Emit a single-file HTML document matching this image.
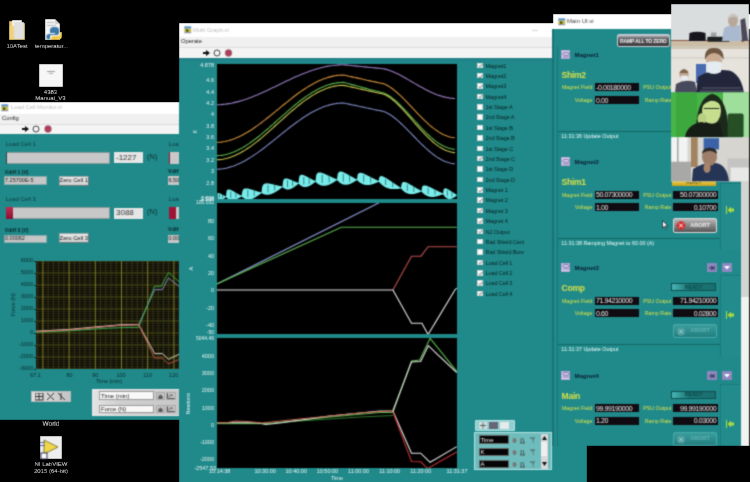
<!DOCTYPE html><html><head><meta charset="utf-8"><style>
html,body{margin:0;padding:0;width:750px;height:482px;overflow:hidden;background:#000;}
body{position:relative;font-family:"Liberation Sans",sans-serif;}
div{position:absolute;box-sizing:border-box;}
.t{white-space:nowrap;}
svg{position:absolute;}
</style></head><body><svg width="10" height="10" style="position:absolute;left:0;top:0"><defs><filter id="gb" x="0" y="0" width="100%" height="100%" color-interpolation-filters="sRGB"><feConvolveMatrix order="3" kernelMatrix="0.09 0.3 0.09 0.3 1 0.3 0.09 0.3 0.09" edgeMode="duplicate" preserveAlpha="true"/></filter></defs></svg><div id="root" style="left:0;top:0;width:750px;height:482px;overflow:hidden;filter:url(#gb);">
<svg style="left:8px;top:18px" width="18" height="23"><path d="M1 3 L7 3 L8 5 L17 5 L17 22 L1 22 Z" fill="#e8c766"/><rect x="4" y="2" width="10" height="18" fill="#f4f4f4"/><rect x="6" y="4" width="10" height="17" fill="#e0e0e0"/><path d="M1 8 L6 8 L6 22 L1 22Z" fill="#f0d27a"/></svg>
<div class="t" style="left:-23.0px;top:41.5px;width:80px;font-size:6px;line-height:8px;color:#fff;text-align:center;">10ATest</div>
<svg style="left:43px;top:18px" width="21" height="23"><path d="M2 1 L12 1 L17 6 L17 22 L2 22Z" fill="#f5f5f5"/><path d="M12 1 L12 6 L17 6Z" fill="#ccc"/><rect x="4" y="4" width="7" height="1" fill="#bbb"/><rect x="4" y="7" width="9" height="1" fill="#bbb"/><path d="M12 9 C7 9 7 11 7 13 L7 15 L12 15 L12 16 L6 16 C3 16 3 19 4 21 L7 21 L7 18 C7 17 8 17 9 17 L14 17 C15 17 16 16 16 15 L16 12 C16 10 15 9 12 9Z" fill="#3b78aa"/><path d="M13 22 C18 22 19 20 19 18 L19 14 L17 14 L17 16 C17 18 16 18 15 18 L10 18 C9 18 8 19 8 20 L8 21 C8 22 10 22 13 22Z" fill="#f2c94a"/></svg>
<div class="t" style="left:11.5px;top:41.5px;width:80px;font-size:6px;line-height:8px;color:#fff;text-align:center;">temperatur...</div>
<div style="left:39px;top:64px;width:24px;height:23px;background:#f7f7f7;"></div>
<div style="left:47px;top:71px;width:8px;height:1px;background:#999;"></div>
<div style="left:49px;top:73px;width:4px;height:1px;background:#aaa;"></div>
<div class="t" style="left:10.5px;top:88.0px;width:80px;font-size:6px;line-height:8px;color:#fff;text-align:center;">4383</div>
<div class="t" style="left:10.5px;top:94.0px;width:80px;font-size:6px;line-height:8px;color:#fff;text-align:center;">Manual_V3</div>
<div class="t" style="left:11.0px;top:419.8px;width:80px;font-size:6.5px;line-height:8.5px;color:#fff;text-align:center;">World</div>
<svg style="left:39px;top:435px" width="24" height="25"><rect x="1" y="1" width="22" height="23" fill="#eee"/><path d="M5 5 L19 12 L5 19Z" fill="#f1d64a" stroke="#6a6a20" stroke-width="0.8"/><rect x="1" y="7" width="5" height="1" fill="#5566aa"/><rect x="1" y="10" width="5" height="1" fill="#5566aa"/><rect x="2" y="18" width="6" height="6" fill="#fff" stroke="#335"/></svg>
<div class="t" style="left:11.0px;top:460.0px;width:80px;font-size:6px;line-height:8px;color:#fff;text-align:center;">NI LabVIEW</div>
<div class="t" style="left:11.0px;top:466.5px;width:80px;font-size:6px;line-height:8px;color:#fff;text-align:center;">2015 (64-bit)</div>
<div style="left:0px;top:101.5px;width:180px;height:12.5px;background:#fff;"></div>
<svg style="left:1.2px;top:104.2px" width="8" height="8"><rect x="0" y="0" width="7.5" height="7.5" fill="#d0d0e8"/><rect x="0.6" y="0.6" width="6.3" height="2" fill="#4a8ed0"/><rect x="0.6" y="2.6" width="6.3" height="4.2" fill="#c2c23c"/><path d="M2 3 L5 4.5 L2.5 6.5Z" fill="#3a3a10"/><rect x="0.6" y="6" width="6.3" height="0.8" fill="#8a8ab0"/></svg>
<div class="t" style="left:11px;top:103.9px;font-size:5.8px;line-height:7.8px;color:#bdbdbd;">Load Cell Monitor.vi</div>
<div style="left:0px;top:114px;width:180px;height:9.5px;background:#f0f0f0;"></div>
<div class="t" style="left:2px;top:114.6px;font-size:5.8px;line-height:7.8px;color:#222;">Config</div>
<div style="left:0px;top:123.5px;width:180px;height:10.5px;background:#f4f4f4;border-top:1px solid #ddd;"></div>
<svg style="left:22px;top:125px" width="32" height="8"><path d="M0 3 L3 3 L3 1 L7 4 L3 7 L3 5 L0 5Z" fill="#111"/><circle cx="14" cy="4" r="3" fill="none" stroke="#444" stroke-width="1"/><circle cx="26" cy="4" r="3.4" fill="#b03c58" stroke="#8a7a80" stroke-width="0.5"/></svg>
<div style="left:0px;top:134px;width:180px;height:286px;background:#20898a;"></div>
<div class="t" style="left:5.5px;top:140.0px;font-size:6px;line-height:8px;color:#0d3b3b;">Load Cell 1</div>
<div style="left:5.5px;top:151.5px;width:104px;height:12.7px;background:#c8c8c8;border:1px solid #8a9a9a;"></div>
<div style="left:5.5px;top:151.5px;width:1.4px;height:12.7px;background:#2c4545;"></div>
<div style="left:114px;top:152.3px;width:29px;height:11.1px;background:#e6e6e6;"></div>
<div class="t" style="left:116px;top:153.0px;font-size:8px;line-height:10px;color:#333;">-1227</div>
<div class="t" style="left:147px;top:151.8px;font-size:7.5px;line-height:9.5px;color:#0d2f2f;">(N)</div>
<div class="t" style="left:4.8px;top:168.6px;font-size:5.1px;line-height:7.1px;color:#062828;font-weight:bold;">Vdiff 1 (V)</div>
<div style="left:4px;top:176.4px;width:43px;height:8.9px;background:#c6c6c6;border:1px solid #8aa;"></div>
<div class="t" style="left:5px;top:177.1px;font-size:5.5px;line-height:7.5px;color:#222;">7.25700E-5</div>
<div style="left:58.8px;top:175.6px;width:30px;height:10.1px;background:linear-gradient(#e8e8e8,#d0d0d0);border:0.5px solid #9aa;border-right:1px solid #6a7a7a;border-bottom:1px solid #6a7a7a;"></div>
<div class="t" style="left:58.8px;top:176.7px;width:30px;font-size:5.8px;line-height:7.8px;color:#222;text-align:center;">Zero Cell 1</div>
<div class="t" style="left:168.5px;top:140.0px;font-size:6px;line-height:8px;color:#0d3b3b;">Load</div>
<div style="left:168.5px;top:151.5px;width:12px;height:12.7px;background:#c8c8c8;"></div>
<div style="left:168.5px;top:151.5px;width:1.5px;height:12.7px;background:#9c1535;"></div>
<div class="t" style="left:168px;top:167.6px;font-size:5.5px;line-height:7.5px;color:#062828;font-weight:bold;">Vdiff</div>
<div style="left:168px;top:176.4px;width:12px;height:8.9px;background:#c6c6c6;"></div>
<div class="t" style="left:168.5px;top:177.1px;font-size:5.5px;line-height:7.5px;color:#222;">6.50</div>
<div class="t" style="left:5.5px;top:195.2px;font-size:6px;line-height:8px;color:#0d3b3b;">Load Cell 3</div>
<div style="left:5.5px;top:206.7px;width:104px;height:12.7px;background:#c8c8c8;border:1px solid #8a9a9a;"></div>
<div style="left:5.5px;top:206.7px;width:7.5px;height:12.7px;background:linear-gradient(#c02a50,#8a1030);"></div>
<div style="left:114px;top:207.5px;width:29px;height:11.1px;background:#e6e6e6;"></div>
<div class="t" style="left:116px;top:208.2px;font-size:8px;line-height:10px;color:#333;">3088</div>
<div class="t" style="left:147px;top:206.9px;font-size:7.5px;line-height:9.5px;color:#0d2f2f;">(N)</div>
<div class="t" style="left:4.8px;top:227.2px;font-size:5.1px;line-height:7.1px;color:#062828;font-weight:bold;">Vdiff 3 (V)</div>
<div style="left:4px;top:234.6px;width:43px;height:8.9px;background:#c6c6c6;border:1px solid #8aa;"></div>
<div class="t" style="left:5px;top:235.2px;font-size:5.5px;line-height:7.5px;color:#222;">0.00062</div>
<div style="left:58.8px;top:233.4px;width:30px;height:10.1px;background:linear-gradient(#e8e8e8,#d0d0d0);border:0.5px solid #9aa;border-right:1px solid #6a7a7a;border-bottom:1px solid #6a7a7a;"></div>
<div class="t" style="left:58.8px;top:234.5px;width:30px;font-size:5.8px;line-height:7.8px;color:#222;text-align:center;">Zero Cell 3</div>
<div class="t" style="left:168.5px;top:195.2px;font-size:6px;line-height:8px;color:#0d3b3b;">Load</div>
<div style="left:168.5px;top:206.7px;width:12px;height:12.7px;background:#c8c8c8;"></div>
<div style="left:168.5px;top:206.7px;width:7.5px;height:12.7px;background:#9c1535;"></div>
<div class="t" style="left:168px;top:226.2px;font-size:5.5px;line-height:7.5px;color:#062828;font-weight:bold;">Vdiff</div>
<div style="left:168px;top:234.6px;width:12px;height:8.9px;background:#c6c6c6;"></div>
<div class="t" style="left:168.5px;top:235.2px;font-size:5.5px;line-height:7.5px;color:#222;">0.00</div>
<svg style="left:35.5px;top:261px" width="143.5" height="108"><rect x="0" y="0" width="143.5" height="108" fill="#0c0b04"/><line x1="0" y1="0.00" x2="143.5" y2="0.00" stroke="#62621f" stroke-width="0.9"/><line x1="0" y1="2.40" x2="143.5" y2="2.40" stroke="#34331a" stroke-width="0.7"/><line x1="0" y1="4.80" x2="143.5" y2="4.80" stroke="#34331a" stroke-width="0.7"/><line x1="0" y1="7.20" x2="143.5" y2="7.20" stroke="#34331a" stroke-width="0.7"/><line x1="0" y1="9.60" x2="143.5" y2="9.60" stroke="#34331a" stroke-width="0.7"/><line x1="0" y1="12.00" x2="143.5" y2="12.00" stroke="#62621f" stroke-width="0.9"/><line x1="0" y1="14.40" x2="143.5" y2="14.40" stroke="#34331a" stroke-width="0.7"/><line x1="0" y1="16.80" x2="143.5" y2="16.80" stroke="#34331a" stroke-width="0.7"/><line x1="0" y1="19.20" x2="143.5" y2="19.20" stroke="#34331a" stroke-width="0.7"/><line x1="0" y1="21.60" x2="143.5" y2="21.60" stroke="#34331a" stroke-width="0.7"/><line x1="0" y1="24.00" x2="143.5" y2="24.00" stroke="#62621f" stroke-width="0.9"/><line x1="0" y1="26.40" x2="143.5" y2="26.40" stroke="#34331a" stroke-width="0.7"/><line x1="0" y1="28.80" x2="143.5" y2="28.80" stroke="#34331a" stroke-width="0.7"/><line x1="0" y1="31.20" x2="143.5" y2="31.20" stroke="#34331a" stroke-width="0.7"/><line x1="0" y1="33.60" x2="143.5" y2="33.60" stroke="#34331a" stroke-width="0.7"/><line x1="0" y1="36.00" x2="143.5" y2="36.00" stroke="#62621f" stroke-width="0.9"/><line x1="0" y1="38.40" x2="143.5" y2="38.40" stroke="#34331a" stroke-width="0.7"/><line x1="0" y1="40.80" x2="143.5" y2="40.80" stroke="#34331a" stroke-width="0.7"/><line x1="0" y1="43.20" x2="143.5" y2="43.20" stroke="#34331a" stroke-width="0.7"/><line x1="0" y1="45.60" x2="143.5" y2="45.60" stroke="#34331a" stroke-width="0.7"/><line x1="0" y1="48.00" x2="143.5" y2="48.00" stroke="#62621f" stroke-width="0.9"/><line x1="0" y1="50.40" x2="143.5" y2="50.40" stroke="#34331a" stroke-width="0.7"/><line x1="0" y1="52.80" x2="143.5" y2="52.80" stroke="#34331a" stroke-width="0.7"/><line x1="0" y1="55.20" x2="143.5" y2="55.20" stroke="#34331a" stroke-width="0.7"/><line x1="0" y1="57.60" x2="143.5" y2="57.60" stroke="#34331a" stroke-width="0.7"/><line x1="0" y1="60.00" x2="143.5" y2="60.00" stroke="#62621f" stroke-width="0.9"/><line x1="0" y1="62.40" x2="143.5" y2="62.40" stroke="#34331a" stroke-width="0.7"/><line x1="0" y1="64.80" x2="143.5" y2="64.80" stroke="#34331a" stroke-width="0.7"/><line x1="0" y1="67.20" x2="143.5" y2="67.20" stroke="#34331a" stroke-width="0.7"/><line x1="0" y1="69.60" x2="143.5" y2="69.60" stroke="#34331a" stroke-width="0.7"/><line x1="0" y1="72.00" x2="143.5" y2="72.00" stroke="#62621f" stroke-width="0.9"/><line x1="0" y1="74.40" x2="143.5" y2="74.40" stroke="#34331a" stroke-width="0.7"/><line x1="0" y1="76.80" x2="143.5" y2="76.80" stroke="#34331a" stroke-width="0.7"/><line x1="0" y1="79.20" x2="143.5" y2="79.20" stroke="#34331a" stroke-width="0.7"/><line x1="0" y1="81.60" x2="143.5" y2="81.60" stroke="#34331a" stroke-width="0.7"/><line x1="0" y1="84.00" x2="143.5" y2="84.00" stroke="#62621f" stroke-width="0.9"/><line x1="0" y1="86.40" x2="143.5" y2="86.40" stroke="#34331a" stroke-width="0.7"/><line x1="0" y1="88.80" x2="143.5" y2="88.80" stroke="#34331a" stroke-width="0.7"/><line x1="0" y1="91.20" x2="143.5" y2="91.20" stroke="#34331a" stroke-width="0.7"/><line x1="0" y1="93.60" x2="143.5" y2="93.60" stroke="#34331a" stroke-width="0.7"/><line x1="0" y1="96.00" x2="143.5" y2="96.00" stroke="#62621f" stroke-width="0.9"/><line x1="0" y1="98.40" x2="143.5" y2="98.40" stroke="#34331a" stroke-width="0.7"/><line x1="0" y1="100.80" x2="143.5" y2="100.80" stroke="#34331a" stroke-width="0.7"/><line x1="0" y1="103.20" x2="143.5" y2="103.20" stroke="#34331a" stroke-width="0.7"/><line x1="0" y1="105.60" x2="143.5" y2="105.60" stroke="#34331a" stroke-width="0.7"/><line x1="0" y1="108.00" x2="143.5" y2="108.00" stroke="#62621f" stroke-width="0.9"/><line x1="1.66" y1="0" x2="1.66" y2="108" stroke="#42411c" stroke-width="0.7"/><line x1="6.90" y1="0" x2="6.90" y2="108" stroke="#8c8a2c" stroke-width="0.9"/><line x1="12.14" y1="0" x2="12.14" y2="108" stroke="#42411c" stroke-width="0.7"/><line x1="17.38" y1="0" x2="17.38" y2="108" stroke="#42411c" stroke-width="0.7"/><line x1="22.62" y1="0" x2="22.62" y2="108" stroke="#42411c" stroke-width="0.7"/><line x1="27.86" y1="0" x2="27.86" y2="108" stroke="#42411c" stroke-width="0.7"/><line x1="33.10" y1="0" x2="33.10" y2="108" stroke="#8c8a2c" stroke-width="0.9"/><line x1="38.34" y1="0" x2="38.34" y2="108" stroke="#42411c" stroke-width="0.7"/><line x1="43.58" y1="0" x2="43.58" y2="108" stroke="#42411c" stroke-width="0.7"/><line x1="48.82" y1="0" x2="48.82" y2="108" stroke="#42411c" stroke-width="0.7"/><line x1="54.06" y1="0" x2="54.06" y2="108" stroke="#42411c" stroke-width="0.7"/><line x1="59.30" y1="0" x2="59.30" y2="108" stroke="#8c8a2c" stroke-width="0.9"/><line x1="64.54" y1="0" x2="64.54" y2="108" stroke="#42411c" stroke-width="0.7"/><line x1="69.78" y1="0" x2="69.78" y2="108" stroke="#42411c" stroke-width="0.7"/><line x1="75.02" y1="0" x2="75.02" y2="108" stroke="#42411c" stroke-width="0.7"/><line x1="80.26" y1="0" x2="80.26" y2="108" stroke="#42411c" stroke-width="0.7"/><line x1="85.50" y1="0" x2="85.50" y2="108" stroke="#8c8a2c" stroke-width="0.9"/><line x1="90.74" y1="0" x2="90.74" y2="108" stroke="#42411c" stroke-width="0.7"/><line x1="95.98" y1="0" x2="95.98" y2="108" stroke="#42411c" stroke-width="0.7"/><line x1="101.22" y1="0" x2="101.22" y2="108" stroke="#42411c" stroke-width="0.7"/><line x1="106.46" y1="0" x2="106.46" y2="108" stroke="#42411c" stroke-width="0.7"/><line x1="111.70" y1="0" x2="111.70" y2="108" stroke="#8c8a2c" stroke-width="0.9"/><line x1="116.94" y1="0" x2="116.94" y2="108" stroke="#42411c" stroke-width="0.7"/><line x1="122.18" y1="0" x2="122.18" y2="108" stroke="#42411c" stroke-width="0.7"/><line x1="127.42" y1="0" x2="127.42" y2="108" stroke="#42411c" stroke-width="0.7"/><line x1="132.66" y1="0" x2="132.66" y2="108" stroke="#42411c" stroke-width="0.7"/><line x1="137.90" y1="0" x2="137.90" y2="108" stroke="#8c8a2c" stroke-width="0.9"/><line x1="143.14" y1="0" x2="143.14" y2="108" stroke="#42411c" stroke-width="0.7"/><polyline points="0.0,70.8 33.3,69.0 59.1,66.6 84.9,64.2 102.7,63.6 118.7,28.7 126.2,28.7 132.4,17.0 144.3,26.4" fill="none" stroke="#8a9ad0" stroke-width="0.9"/><polyline points="0.0,71.3 33.3,69.8 59.1,68.0 84.9,66.6 102.7,66.3 118.7,25.2 125.4,25.2 132.4,11.5 144.3,21.8" fill="none" stroke="#3ab54a" stroke-width="0.9"/><polyline points="0.0,70.2 33.3,68.4 59.1,66.0 84.9,63.8 102.7,63.6 118.7,92.6 126.5,92.6 132.4,98.3 144.3,92.6" fill="none" stroke="#e8e0d0" stroke-width="0.9"/><polyline points="0.0,70.6 33.3,68.9 59.1,66.5 84.9,64.2 102.7,63.7 118.5,97.0 126.2,97.0 132.4,102.9 144.3,98.0" fill="none" stroke="#c85848" stroke-width="0.9"/></svg>
<div class="t" style="right:717px;top:257.2px;font-size:5.5px;line-height:7.5px;color:#0a3030;text-align:right;">6000</div>
<div style="left:33.5px;top:260.7px;width:2px;height:0.7px;background:#0a3030;"></div>
<div class="t" style="right:717px;top:269.2px;font-size:5.5px;line-height:7.5px;color:#0a3030;text-align:right;">5000</div>
<div style="left:33.5px;top:272.7px;width:2px;height:0.7px;background:#0a3030;"></div>
<div class="t" style="right:717px;top:281.2px;font-size:5.5px;line-height:7.5px;color:#0a3030;text-align:right;">4000</div>
<div style="left:33.5px;top:284.7px;width:2px;height:0.7px;background:#0a3030;"></div>
<div class="t" style="right:717px;top:293.2px;font-size:5.5px;line-height:7.5px;color:#0a3030;text-align:right;">3000</div>
<div style="left:33.5px;top:296.7px;width:2px;height:0.7px;background:#0a3030;"></div>
<div class="t" style="right:717px;top:305.2px;font-size:5.5px;line-height:7.5px;color:#0a3030;text-align:right;">2000</div>
<div style="left:33.5px;top:308.7px;width:2px;height:0.7px;background:#0a3030;"></div>
<div class="t" style="right:717px;top:317.2px;font-size:5.5px;line-height:7.5px;color:#0a3030;text-align:right;">1000</div>
<div style="left:33.5px;top:320.7px;width:2px;height:0.7px;background:#0a3030;"></div>
<div class="t" style="right:717px;top:329.2px;font-size:5.5px;line-height:7.5px;color:#0a3030;text-align:right;">0</div>
<div style="left:33.5px;top:332.7px;width:2px;height:0.7px;background:#0a3030;"></div>
<div class="t" style="right:717px;top:341.2px;font-size:5.5px;line-height:7.5px;color:#0a3030;text-align:right;">-1000</div>
<div style="left:33.5px;top:344.7px;width:2px;height:0.7px;background:#0a3030;"></div>
<div class="t" style="right:717px;top:353.2px;font-size:5.5px;line-height:7.5px;color:#0a3030;text-align:right;">-2000</div>
<div style="left:33.5px;top:356.7px;width:2px;height:0.7px;background:#0a3030;"></div>
<div class="t" style="right:717px;top:365.2px;font-size:5.5px;line-height:7.5px;color:#0a3030;text-align:right;">-3000</div>
<div style="left:33.5px;top:368.7px;width:2px;height:0.7px;background:#0a3030;"></div>
<div class="t" style="left:-6.0px;top:301.25px;width:40px;height:7.5px;font-size:5.5px;line-height:7.5px;color:#0a3030;text-align:center;transform:rotate(-90deg);">Force (N)</div>
<div class="t" style="left:25.5px;top:371.8px;width:20px;font-size:5.5px;line-height:7.5px;color:#0a3030;text-align:center;">67.1</div>
<div class="t" style="left:59.5px;top:371.8px;width:20px;font-size:5.5px;line-height:7.5px;color:#0a3030;text-align:center;">80</div>
<div class="t" style="left:85.2px;top:371.8px;width:20px;font-size:5.5px;line-height:7.5px;color:#0a3030;text-align:center;">90</div>
<div class="t" style="left:111.0px;top:371.8px;width:20px;font-size:5.5px;line-height:7.5px;color:#0a3030;text-align:center;">100</div>
<div class="t" style="left:137.6px;top:371.8px;width:20px;font-size:5.5px;line-height:7.5px;color:#0a3030;text-align:center;">110</div>
<div class="t" style="left:163.7px;top:371.8px;width:20px;font-size:5.5px;line-height:7.5px;color:#0a3030;text-align:center;">120</div>
<div class="t" style="left:89.0px;top:378.2px;width:40px;font-size:5.5px;line-height:7.5px;color:#0a3030;text-align:center;">Time (min)</div>
<div style="left:31px;top:391.4px;width:40px;height:11px;background:linear-gradient(90deg,#e0e0e0,#c4c4c4);border:0.5px solid #bbb;"></div>
<svg style="left:35px;top:393px" width="32" height="8"><rect x="0" y="0" width="8" height="7" fill="none" stroke="#333"/><line x1="0" y1="3.5" x2="8" y2="3.5" stroke="#333"/><line x1="4" y1="0" x2="4" y2="7" stroke="#333"/><path d="M12 0 L19 7 M19 0 L12 7" stroke="#333"/><path d="M23 0 L30 7 M26 0 L26 7" stroke="#333"/></svg>
<div style="left:91.7px;top:388.9px;width:90px;height:27.3px;background:linear-gradient(90deg,#e4e4e4,#cfcfcf 30%,#c8c8c8);border:1px solid #e8e8e8;"></div>
<div style="left:99.3px;top:391.4px;width:55.2px;height:8.9px;background:#f8f8f8;border:1px solid #999;"></div>
<div class="t" style="left:101px;top:391.8px;font-size:6px;line-height:8px;color:#222;">Time (min)</div>
<div style="left:99.3px;top:404.6px;width:55.2px;height:8.6px;background:#f8f8f8;border:1px solid #999;"></div>
<div class="t" style="left:101px;top:404.9px;font-size:6px;line-height:8px;color:#222;">Force (N)</div>
<div style="left:156px;top:391.8px;width:9px;height:8px;background:#c4c4c4;border:0.5px solid #aaa;"></div>
<svg style="left:158px;top:392.8px" width="5" height="6"><path d="M0.5 5.5 L0.5 3 Q2.5 0 4.5 3 L4.5 5.5Z" fill="#666"/><rect x="0.5" y="4" width="4" height="1.5" fill="#444"/></svg>
<div style="left:165.5px;top:391.8px;width:10px;height:8px;background:#c4c4c4;border:0.5px solid #aaa;"></div>
<svg style="left:167px;top:392.8px" width="8" height="6"><path d="M0.5 0.5 L0.5 5.5 L7.5 5.5 M2 4 L4 1.5 L6 3" fill="none" stroke="#333" stroke-width="0.8"/></svg>
<div style="left:156px;top:404.9px;width:9px;height:8px;background:#c4c4c4;border:0.5px solid #aaa;"></div>
<svg style="left:158px;top:405.9px" width="5" height="6"><path d="M0.5 5.5 L0.5 3 Q2.5 0 4.5 3 L4.5 5.5Z" fill="#666"/><rect x="0.5" y="4" width="4" height="1.5" fill="#444"/></svg>
<div style="left:165.5px;top:404.9px;width:10px;height:8px;background:#c4c4c4;border:0.5px solid #aaa;"></div>
<svg style="left:167px;top:405.9px" width="8" height="6"><path d="M0.5 0.5 L0.5 5.5 L7.5 5.5 M2 4 L4 1.5 L6 3" fill="none" stroke="#333" stroke-width="0.8"/></svg>
<div style="left:179px;top:23px;width:408px;height:14.3px;background:#fff;"></div>
<svg style="left:183.8px;top:26.2px" width="8" height="8"><rect x="0" y="0" width="7.5" height="7.5" fill="#d0d0e8"/><rect x="0.6" y="0.6" width="6.3" height="2" fill="#4a8ed0"/><rect x="0.6" y="2.6" width="6.3" height="4.2" fill="#c2c23c"/><path d="M2 3 L5 4.5 L2.5 6.5Z" fill="#3a3a10"/><rect x="0.6" y="6" width="6.3" height="0.8" fill="#8a8ab0"/></svg>
<div class="t" style="left:193px;top:26.5px;font-size:5.8px;line-height:7.8px;color:#bdbdbd;">Multi Graph.vi</div>
<div class="t" style="left:532px;top:26.0px;font-size:6px;line-height:8px;color:#999;">&#8212;</div>
<div style="left:179px;top:37.3px;width:408px;height:9.7px;background:#f0f0f0;"></div>
<div class="t" style="left:181px;top:37.9px;font-size:5.8px;line-height:7.8px;color:#222;">Operate</div>
<div style="left:179px;top:47px;width:408px;height:10.5px;background:#f4f4f4;border-top:1px solid #dcdcdc;"></div>
<svg style="left:203px;top:48.5px" width="32" height="8"><path d="M0 3 L3 3 L3 1 L7 4 L3 7 L3 5 L0 5Z" fill="#111"/><circle cx="14" cy="4" r="3" fill="none" stroke="#444" stroke-width="1"/><circle cx="25.5" cy="4" r="3.4" fill="#b03c58" stroke="#8a7a80" stroke-width="0.5"/></svg>
<div style="left:179px;top:57.5px;width:408px;height:424.5px;background:linear-gradient(#1c7c7b 0px,#22838a 1px,#20898a 5px);"></div>
<div style="left:217.3px;top:64px;width:239.7px;height:135px;background:#000;"></div>
<div style="left:217.3px;top:203px;width:239.7px;height:130.7px;background:#000;"></div>
<div style="left:217.3px;top:338px;width:239.7px;height:130px;background:#000;"></div>
<svg style="left:217.3px;top:64px" width="239.7" height="135"><polyline points="0.0,40.7 2.0,40.7 4.0,40.6 6.0,40.4 8.0,40.2 10.0,39.9 12.0,39.6 14.0,39.3 16.0,38.9 18.0,38.4 20.0,37.9 22.0,37.4 24.0,36.8 26.0,36.2 28.0,35.6 30.0,34.9 32.0,34.1 34.0,33.4 36.0,32.6 38.0,31.8 40.0,31.0 42.0,30.1 44.0,29.2 46.0,28.3 48.0,27.4 50.0,26.5 52.0,25.5 54.0,24.6 56.0,23.6 58.0,22.7 60.0,21.7 62.0,20.7 64.0,19.7 66.0,18.8 68.0,17.8 70.0,16.8 72.0,15.9 74.0,15.0 76.0,14.0 78.0,13.1 80.0,12.2 82.0,11.4 84.0,10.5 86.0,9.7 88.0,8.9 90.0,8.2 92.0,7.4 94.0,6.7 96.0,6.1 98.0,5.4 100.0,4.8 102.0,4.3 104.0,3.7 106.0,3.2 108.0,2.8 110.0,2.4 112.0,2.0 114.0,1.7 116.0,1.5 118.0,1.2 120.0,1.1 122.0,0.9 124.0,0.8 126.0,0.8 128.0,0.9 130.0,1.1 132.0,1.3 134.0,1.5 136.0,1.7 138.0,1.9 140.0,2.1 142.0,2.3 144.0,2.5 146.0,2.7 148.0,2.9 150.0,3.1 152.0,3.3 154.0,3.5 156.0,3.7 158.0,3.9 160.0,4.1 162.0,4.3 164.0,4.5 166.0,4.7 168.0,5.1 170.0,5.6 172.0,6.3 174.0,7.0 176.0,7.8 178.0,8.7 180.0,9.6 182.0,10.6 184.0,11.6 186.0,12.7 188.0,13.8 190.0,14.9 192.0,16.1 194.0,17.3 196.0,18.4 198.0,19.6 200.0,20.8 202.0,21.9 204.0,23.0 206.0,24.1 208.0,25.2 210.0,26.2 212.0,27.2 214.0,28.2 216.0,29.1 218.0,29.9 220.0,30.7 222.0,31.4 224.0,32.0 226.0,32.6 228.0,33.1 230.0,33.5 232.0,33.9 234.0,34.2 236.0,34.4 238.0,34.5" fill="none" stroke="#9b7fc8" stroke-width="1.1"/><polyline points="0.0,78.3 2.0,78.2 4.0,78.1 6.0,77.8 8.0,77.5 10.0,77.0 12.0,76.5 14.0,75.9 16.0,75.2 18.0,74.5 20.0,73.6 22.0,72.7 24.0,71.8 26.0,70.7 28.0,69.6 30.0,68.5 32.0,67.2 34.0,66.0 36.0,64.7 38.0,63.3 40.0,61.9 42.0,60.4 44.0,59.0 46.0,57.4 48.0,55.9 50.0,54.3 52.0,52.7 54.0,51.1 56.0,49.5 58.0,47.9 60.0,46.2 62.0,44.6 64.0,42.9 66.0,41.3 68.0,39.7 70.0,38.1 72.0,36.5 74.0,34.9 76.0,33.3 78.0,31.8 80.0,30.3 82.0,28.8 84.0,27.4 86.0,26.0 88.0,24.7 90.0,23.4 92.0,22.2 94.0,21.0 96.0,19.9 98.0,18.8 100.0,17.8 102.0,16.8 104.0,15.9 106.0,15.1 108.0,14.4 110.0,13.7 112.0,13.1 114.0,12.6 116.0,12.1 118.0,11.7 120.0,11.4 122.0,11.2 124.0,11.1 126.0,11.0 128.0,11.3 130.0,11.7 132.0,12.2 134.0,12.6 136.0,13.1 138.0,13.5 140.0,13.9 142.0,14.4 144.0,14.8 146.0,15.3 148.0,15.7 150.0,16.2 152.0,16.6 154.0,17.1 156.0,17.5 158.0,17.9 160.0,18.4 162.0,18.8 164.0,19.2 166.0,19.6 168.0,20.3 170.0,21.3 172.0,22.4 174.0,23.7 176.0,25.2 178.0,26.8 180.0,28.5 182.0,30.3 184.0,32.2 186.0,34.1 188.0,36.2 190.0,38.2 192.0,40.3 194.0,42.4 196.0,44.6 198.0,46.7 200.0,48.8 202.0,50.9 204.0,52.9 206.0,54.9 208.0,56.9 210.0,58.7 212.0,60.6 214.0,62.3 216.0,63.9 218.0,65.4 220.0,66.8 222.0,68.1 224.0,69.3 226.0,70.4 228.0,71.3 230.0,72.1 232.0,72.7 234.0,73.2 236.0,73.5 238.0,73.7" fill="none" stroke="#d4923a" stroke-width="1.1"/><polyline points="0.0,91.6 2.0,91.5 4.0,91.4 6.0,91.1 8.0,90.7 10.0,90.2 12.0,89.7 14.0,89.0 16.0,88.3 18.0,87.4 20.0,86.5 22.0,85.5 24.0,84.5 26.0,83.4 28.0,82.2 30.0,80.9 32.0,79.6 34.0,78.2 36.0,76.8 38.0,75.3 40.0,73.7 42.0,72.2 44.0,70.6 46.0,68.9 48.0,67.2 50.0,65.5 52.0,63.8 54.0,62.0 56.0,60.3 58.0,58.5 60.0,56.7 62.0,54.9 64.0,53.1 66.0,51.3 68.0,49.6 70.0,47.8 72.0,46.1 74.0,44.4 76.0,42.7 78.0,41.0 80.0,39.4 82.0,37.8 84.0,36.3 86.0,34.8 88.0,33.3 90.0,31.9 92.0,30.6 94.0,29.3 96.0,28.0 98.0,26.9 100.0,25.8 102.0,24.7 104.0,23.8 106.0,22.9 108.0,22.1 110.0,21.3 112.0,20.7 114.0,20.1 116.0,19.6 118.0,19.2 120.0,18.9 122.0,18.6 124.0,18.5 126.0,18.4 128.0,18.7 130.0,19.3 132.0,19.8 134.0,20.4 136.0,20.9 138.0,21.4 140.0,22.0 142.0,22.5 144.0,23.0 146.0,23.6 148.0,24.1 150.0,24.6 152.0,25.2 154.0,25.7 156.0,26.2 158.0,26.8 160.0,27.3 162.0,27.8 164.0,28.3 166.0,28.7 168.0,29.5 170.0,30.5 172.0,31.7 174.0,33.0 176.0,34.6 178.0,36.2 180.0,38.0 182.0,39.9 184.0,41.9 186.0,43.9 188.0,46.0 190.0,48.2 192.0,50.4 194.0,52.6 196.0,54.8 198.0,57.0 200.0,59.2 202.0,61.4 204.0,63.6 206.0,65.7 208.0,67.7 210.0,69.7 212.0,71.5 214.0,73.3 216.0,75.0 218.0,76.6 220.0,78.1 222.0,79.5 224.0,80.7 226.0,81.8 228.0,82.8 230.0,83.6 232.0,84.2 234.0,84.8 236.0,85.1 238.0,85.3" fill="none" stroke="#5cb84c" stroke-width="1.1"/><polyline points="0.0,95.7 2.0,95.6 4.0,95.5 6.0,95.2 8.0,94.8 10.0,94.3 12.0,93.7 14.0,93.1 16.0,92.3 18.0,91.5 20.0,90.5 22.0,89.5 24.0,88.5 26.0,87.3 28.0,86.1 30.0,84.8 32.0,83.5 34.0,82.1 36.0,80.6 38.0,79.1 40.0,77.6 42.0,76.0 44.0,74.3 46.0,72.6 48.0,70.9 50.0,69.2 52.0,67.4 54.0,65.6 56.0,63.9 58.0,62.0 60.0,60.2 62.0,58.4 64.0,56.6 66.0,54.8 68.0,53.0 70.0,51.2 72.0,49.4 74.0,47.7 76.0,46.0 78.0,44.3 80.0,42.6 82.0,41.0 84.0,39.5 86.0,37.9 88.0,36.4 90.0,35.0 92.0,33.7 94.0,32.3 96.0,31.1 98.0,29.9 100.0,28.8 102.0,27.7 104.0,26.8 106.0,25.9 108.0,25.0 110.0,24.3 112.0,23.6 114.0,23.0 116.0,22.5 118.0,22.1 120.0,21.8 122.0,21.5 124.0,21.4 126.0,21.3 128.0,21.6 130.0,22.0 132.0,22.5 134.0,22.9 136.0,23.4 138.0,23.8 140.0,24.2 142.0,24.7 144.0,25.1 146.0,25.6 148.0,26.0 150.0,26.5 152.0,26.9 154.0,27.4 156.0,27.8 158.0,28.2 160.0,28.7 162.0,29.1 164.0,29.5 166.0,30.0 168.0,30.7 170.0,31.8 172.0,33.0 174.0,34.4 176.0,36.0 178.0,37.7 180.0,39.6 182.0,41.5 184.0,43.6 186.0,45.7 188.0,47.9 190.0,50.1 192.0,52.4 194.0,54.7 196.0,57.0 198.0,59.3 200.0,61.6 202.0,63.8 204.0,66.1 206.0,68.2 208.0,70.3 210.0,72.4 212.0,74.3 214.0,76.2 216.0,78.0 218.0,79.6 220.0,81.1 222.0,82.6 224.0,83.8 226.0,85.0 228.0,86.0 230.0,86.8 232.0,87.5 234.0,88.0 236.0,88.4 238.0,88.6" fill="none" stroke="#c8c850" stroke-width="1.1"/><polyline points="0.0,105.2 2.0,105.1 4.0,105.0 6.0,104.7 8.0,104.4 10.0,104.0 12.0,103.4 14.0,102.8 16.0,102.2 18.0,101.4 20.0,100.6 22.0,99.7 24.0,98.8 26.0,97.7 28.0,96.7 30.0,95.5 32.0,94.3 34.0,93.1 36.0,91.8 38.0,90.4 40.0,89.1 42.0,87.6 44.0,86.2 46.0,84.7 48.0,83.2 50.0,81.6 52.0,80.0 54.0,78.5 56.0,76.9 58.0,75.3 60.0,73.6 62.0,72.0 64.0,70.4 66.0,68.8 68.0,67.2 70.0,65.6 72.0,64.0 74.0,62.5 76.0,61.0 78.0,59.5 80.0,58.0 82.0,56.6 84.0,55.2 86.0,53.8 88.0,52.5 90.0,51.2 92.0,50.0 94.0,48.8 96.0,47.7 98.0,46.7 100.0,45.7 102.0,44.7 104.0,43.9 106.0,43.1 108.0,42.3 110.0,41.7 112.0,41.1 114.0,40.5 116.0,40.1 118.0,39.7 120.0,39.4 122.0,39.2 124.0,39.1 126.0,39.0 128.0,39.3 130.0,39.7 132.0,40.1 134.0,40.6 136.0,41.0 138.0,41.4 140.0,41.8 142.0,42.3 144.0,42.7 146.0,43.1 148.0,43.5 150.0,44.0 152.0,44.4 154.0,44.8 156.0,45.3 158.0,45.7 160.0,46.1 162.0,46.5 164.0,46.9 166.0,47.3 168.0,48.0 170.0,48.9 172.0,50.0 174.0,51.3 176.0,52.7 178.0,54.3 180.0,55.9 182.0,57.6 184.0,59.5 186.0,61.4 188.0,63.3 190.0,65.3 192.0,67.4 194.0,69.4 196.0,71.5 198.0,73.5 200.0,75.6 202.0,77.6 204.0,79.6 206.0,81.5 208.0,83.4 210.0,85.2 212.0,87.0 214.0,88.6 216.0,90.2 218.0,91.7 220.0,93.1 222.0,94.3 224.0,95.5 226.0,96.5 228.0,97.4 230.0,98.1 232.0,98.7 234.0,99.2 236.0,99.6 238.0,99.7" fill="none" stroke="#7f8ac4" stroke-width="1.1"/><polygon points="0.5,129.2 1.0,128.9 1.5,128.9 2.0,129.0 2.5,129.2 3.0,129.4 3.5,129.6 4.0,129.9 4.5,130.2 5.0,130.4 5.5,130.7 6.0,131.0 6.5,131.3 7.0,131.5 7.5,131.8 8.0,132.0 8.5,132.3 9.0,132.5 9.5,127.3 10.0,126.2 10.5,125.7 11.0,125.5 11.5,125.4 12.0,125.4 12.5,125.5 13.0,125.7 13.5,125.8 14.0,126.0 14.5,126.3 15.0,126.5 15.5,126.8 16.0,127.1 16.5,127.3 17.0,127.6 17.5,127.9 18.0,128.2 18.5,128.5 19.0,128.8 19.5,129.1 20.0,129.4 20.5,129.6 21.0,129.9 21.5,130.2 22.0,130.5 22.5,130.8 23.0,131.0 23.5,131.3 24.0,131.5 24.5,131.8 25.0,129.1 25.5,126.7 26.0,125.7 26.5,125.2 27.0,124.8 27.5,124.6 28.0,124.5 28.5,124.4 29.0,124.4 29.5,124.4 30.0,124.4 30.5,124.5 31.0,124.6 31.5,124.7 32.0,124.8 32.5,124.9 33.0,125.1 33.5,125.2 34.0,125.4 34.5,125.5 35.0,125.7 35.5,125.8 36.0,126.0 36.5,126.1 37.0,126.3 37.5,126.4 38.0,126.6 38.5,126.8 39.0,126.9 39.5,127.1 40.0,127.2 40.5,127.4 41.0,127.5 41.5,127.7 42.0,127.8 42.5,127.9 43.0,128.1 43.5,128.2 44.0,128.3 44.5,128.5 45.0,123.7 45.5,122.0 46.0,121.0 46.5,120.4 47.0,120.0 47.5,119.7 48.0,119.6 48.5,119.4 49.0,119.4 49.5,119.3 50.0,119.3 50.5,119.3 51.0,119.4 51.5,119.4 52.0,119.5 52.5,119.6 53.0,119.7 53.5,119.8 54.0,119.9 54.5,120.0 55.0,120.1 55.5,120.3 56.0,120.4 56.5,120.5 57.0,120.6 57.5,120.7 58.0,120.9 58.5,121.0 59.0,121.1 59.5,121.2 60.0,121.3 60.5,121.5 61.0,121.6 61.5,121.7 62.0,121.8 62.5,121.9 63.0,122.0 63.5,122.1 64.0,122.2 64.5,122.3 65.0,122.4 65.5,122.5 66.0,117.6 66.5,116.0 67.0,115.2 67.5,114.8 68.0,114.5 68.5,114.4 69.0,114.4 69.5,114.4 70.0,114.5 70.5,114.6 71.0,114.7 71.5,114.9 72.0,115.1 72.5,115.3 73.0,115.5 73.5,115.7 74.0,115.9 74.5,116.1 75.0,116.3 75.5,116.5 76.0,116.8 76.5,117.0 77.0,117.2 77.5,117.4 78.0,117.6 78.5,117.8 79.0,118.0 79.5,118.2 80.0,118.4 80.5,118.6 81.0,118.8 81.5,118.9 82.0,114.0 82.5,112.3 83.0,111.5 83.5,111.0 84.0,110.8 84.5,110.7 85.0,110.7 85.5,110.8 86.0,110.9 86.5,111.0 87.0,111.2 87.5,111.4 88.0,111.7 88.5,111.9 89.0,112.1 89.5,112.4 90.0,112.7 90.5,112.9 91.0,113.2 91.5,113.5 92.0,113.8 92.5,114.0 93.0,114.3 93.5,114.6 94.0,114.9 94.5,115.1 95.0,115.4 95.5,115.6 96.0,115.9 96.5,116.1 97.0,116.4 97.5,116.6 98.0,116.9 98.5,117.1 99.0,112.2 99.5,110.5 100.0,109.6 100.5,109.1 101.0,108.7 101.5,108.5 102.0,108.4 102.5,108.4 103.0,108.4 103.5,108.5 104.0,108.6 104.5,108.7 105.0,108.9 105.5,109.0 106.0,109.2 106.5,109.4 107.0,109.6 107.5,109.8 108.0,110.0 108.5,110.2 109.0,110.5 109.5,110.7 110.0,110.9 110.5,111.2 111.0,111.4 111.5,111.6 112.0,111.9 112.5,112.1 113.0,112.3 113.5,112.6 114.0,112.8 114.5,113.0 115.0,113.3 115.5,113.5 116.0,113.7 116.5,113.9 117.0,114.1 117.5,114.4 118.0,114.6 118.5,114.8 119.0,115.0 119.5,115.2 120.0,115.4 120.5,111.3 121.0,109.3 121.5,108.4 122.0,108.0 122.5,107.7 123.0,107.5 123.5,107.5 124.0,107.5 124.5,107.6 125.0,107.7 125.5,107.9 126.0,108.1 126.5,108.3 127.0,108.5 127.5,108.7 128.0,109.0 128.5,109.2 129.0,109.5 129.5,109.8 130.0,110.0 130.5,110.3 131.0,110.6 131.5,110.9 132.0,111.2 132.5,111.4 133.0,111.7 133.5,112.0 134.0,112.3 134.5,112.5 135.0,112.8 135.5,113.1 136.0,113.4 136.5,113.6 137.0,113.9 137.5,114.2 138.0,114.4 138.5,114.7 139.0,114.9 139.5,115.2 140.0,115.4 140.5,111.5 141.0,110.1 141.5,109.4 142.0,109.1 142.5,108.9 143.0,108.8 143.5,108.8 144.0,108.8 144.5,108.9 145.0,109.0 145.5,109.2 146.0,109.3 146.5,109.5 147.0,109.7 147.5,109.9 148.0,110.2 148.5,110.4 149.0,110.7 149.5,110.9 150.0,111.2 150.5,111.4 151.0,111.7 151.5,111.9 152.0,112.2 152.5,112.5 153.0,112.7 153.5,113.0 154.0,113.2 154.5,113.5 155.0,113.8 155.5,114.0 156.0,114.3 156.5,114.6 157.0,114.8 157.5,115.1 158.0,115.3 158.5,115.6 159.0,115.8 159.5,116.1 160.0,116.3 160.5,116.5 161.0,116.8 161.5,117.0 162.0,114.9 162.5,113.1 163.0,112.5 163.5,112.2 164.0,112.1 164.5,112.1 165.0,112.2 165.5,112.3 166.0,112.5 166.5,112.7 167.0,112.9 167.5,113.2 168.0,113.4 168.5,113.7 169.0,114.0 169.5,114.3 170.0,114.6 170.5,114.9 171.0,115.2 171.5,115.6 172.0,115.9 172.5,116.2 173.0,116.6 173.5,116.9 174.0,117.3 174.5,117.6 175.0,117.9 175.5,118.3 176.0,118.6 176.5,119.0 177.0,119.3 177.5,119.6 178.0,120.0 178.5,120.3 179.0,120.6 179.5,121.0 180.0,121.3 180.5,121.6 181.0,122.0 181.5,122.3 182.0,122.6 182.5,122.9 183.0,123.2 183.5,123.6 184.0,123.9 184.5,120.2 185.0,119.0 185.5,118.4 186.0,118.1 186.5,118.0 187.0,117.9 187.5,118.0 188.0,118.1 188.5,118.2 189.0,118.4 189.5,118.6 190.0,118.8 190.5,119.0 191.0,119.3 191.5,119.5 192.0,119.8 192.5,120.1 193.0,120.4 193.5,120.7 194.0,120.9 194.5,121.2 195.0,121.5 195.5,121.8 196.0,122.1 196.5,122.4 197.0,122.7 197.5,123.0 198.0,123.3 198.5,123.6 199.0,123.9 199.5,124.2 200.0,124.5 200.5,124.7 201.0,125.0 201.5,125.3 202.0,125.6 202.5,125.9 203.0,126.1 203.5,126.4 204.0,126.7 204.5,126.9 205.0,123.2 205.5,122.3 206.0,121.8 206.5,121.5 207.0,121.4 207.5,121.4 208.0,121.4 208.5,121.5 209.0,121.6 209.5,121.7 210.0,121.9 210.5,122.1 211.0,122.3 211.5,122.5 212.0,122.7 212.5,122.9 213.0,123.1 213.5,123.4 214.0,123.6 214.5,123.9 215.0,124.1 215.5,124.4 216.0,124.6 216.5,124.9 217.0,125.1 217.5,125.4 218.0,125.6 218.5,125.9 219.0,126.1 219.5,126.4 220.0,126.6 220.5,126.9 221.0,127.1 221.5,127.4 222.0,127.6 222.5,127.9 223.0,128.1 223.5,128.3 224.0,128.6 224.5,128.8 225.0,129.1 225.5,129.3 226.0,129.5 226.5,126.0 227.0,124.9 227.5,124.5 228.0,124.3 228.5,124.3 229.0,124.4 229.5,124.6 230.0,124.8 230.5,125.0 231.0,125.3 231.5,125.6 232.0,125.9 232.5,126.2 233.0,126.5 233.5,126.8 234.0,127.2 234.5,127.5 235.0,127.8 235.5,128.1 236.0,128.4 236.5,128.8 237.0,129.1 237.5,129.4 238.0,129.7 238.5,130.0 239.0,130.3 239.5,130.6 239.5,132.0 239.0,132.3 238.5,132.6 238.0,133.0 237.5,133.3 237.0,133.6 236.5,133.8 236.0,134.1 235.5,134.3 235.0,134.5 234.5,134.7 234.0,134.8 233.5,134.9 233.0,135.0 232.5,135.0 232.0,135.0 231.5,134.9 231.0,134.8 230.5,134.6 230.0,134.3 229.5,134.0 229.0,133.7 228.5,133.2 228.0,132.7 227.5,132.2 227.0,131.5 226.5,130.8 226.0,130.2 225.5,130.4 225.0,130.6 224.5,130.7 224.0,130.9 223.5,131.1 223.0,131.3 222.5,131.5 222.0,131.7 221.5,131.8 221.0,132.0 220.5,132.1 220.0,132.3 219.5,132.4 219.0,132.5 218.5,132.6 218.0,132.7 217.5,132.8 217.0,132.9 216.5,132.9 216.0,133.0 215.5,133.0 215.0,133.0 214.5,133.0 214.0,132.9 213.5,132.9 213.0,132.8 212.5,132.7 212.0,132.6 211.5,132.4 211.0,132.3 210.5,132.1 210.0,131.9 209.5,131.6 209.0,131.3 208.5,131.1 208.0,130.7 207.5,130.4 207.0,130.0 206.5,129.6 206.0,129.2 205.5,128.7 205.0,128.1 204.5,127.5 204.0,127.7 203.5,127.9 203.0,128.1 202.5,128.3 202.0,128.5 201.5,128.7 201.0,128.8 200.5,129.0 200.0,129.2 199.5,129.3 199.0,129.5 198.5,129.6 198.0,129.7 197.5,129.9 197.0,129.9 196.5,130.0 196.0,130.1 195.5,130.1 195.0,130.2 194.5,130.2 194.0,130.2 193.5,130.1 193.0,130.1 192.5,130.0 192.0,129.9 191.5,129.8 191.0,129.6 190.5,129.5 190.0,129.3 189.5,129.0 189.0,128.8 188.5,128.5 188.0,128.2 187.5,127.9 187.0,127.5 186.5,127.1 186.0,126.6 185.5,126.2 185.0,125.6 184.5,125.0 184.0,124.5 183.5,124.6 183.0,124.6 182.5,124.7 182.0,124.8 181.5,124.8 181.0,124.9 180.5,124.9 180.0,125.0 179.5,125.0 179.0,125.1 178.5,125.1 178.0,125.1 177.5,125.1 177.0,125.1 176.5,125.1 176.0,125.1 175.5,125.1 175.0,125.1 174.5,125.0 174.0,125.0 173.5,124.9 173.0,124.8 172.5,124.7 172.0,124.6 171.5,124.4 171.0,124.3 170.5,124.1 170.0,123.9 169.5,123.7 169.0,123.5 168.5,123.2 168.0,123.0 167.5,122.7 167.0,122.4 166.5,122.1 166.0,121.7 165.5,121.3 165.0,120.9 164.5,120.5 164.0,120.1 163.5,119.6 163.0,119.1 162.5,118.5 162.0,117.9 161.5,117.9 161.0,118.1 160.5,118.3 160.0,118.5 159.5,118.7 159.0,118.9 158.5,119.1 158.0,119.3 157.5,119.5 157.0,119.7 156.5,119.9 156.0,120.0 155.5,120.2 155.0,120.3 154.5,120.5 154.0,120.6 153.5,120.7 153.0,120.8 152.5,120.9 152.0,121.0 151.5,121.0 151.0,121.0 150.5,121.1 150.0,121.0 149.5,121.0 149.0,121.0 148.5,120.9 148.0,120.8 147.5,120.7 147.0,120.6 146.5,120.4 146.0,120.3 145.5,120.1 145.0,119.8 144.5,119.6 144.0,119.3 143.5,119.0 143.0,118.7 142.5,118.3 142.0,117.9 141.5,117.5 141.0,117.0 140.5,116.5 140.0,116.1 139.5,116.4 139.0,116.7 138.5,117.0 138.0,117.3 137.5,117.6 137.0,117.9 136.5,118.2 136.0,118.5 135.5,118.7 135.0,119.0 134.5,119.2 134.0,119.5 133.5,119.7 133.0,119.9 132.5,120.1 132.0,120.3 131.5,120.4 131.0,120.5 130.5,120.6 130.0,120.7 129.5,120.8 129.0,120.8 128.5,120.8 128.0,120.8 127.5,120.7 127.0,120.6 126.5,120.5 126.0,120.4 125.5,120.2 125.0,120.0 124.5,119.8 124.0,119.5 123.5,119.2 123.0,118.8 122.5,118.5 122.0,118.0 121.5,117.6 121.0,117.0 120.5,116.4 120.0,116.2 119.5,116.5 119.0,116.8 118.5,117.1 118.0,117.5 117.5,117.8 117.0,118.1 116.5,118.4 116.0,118.7 115.5,119.0 115.0,119.3 114.5,119.5 114.0,119.8 113.5,120.0 113.0,120.3 112.5,120.5 112.0,120.7 111.5,120.9 111.0,121.1 110.5,121.3 110.0,121.4 109.5,121.5 109.0,121.6 108.5,121.7 108.0,121.8 107.5,121.8 107.0,121.8 106.5,121.8 106.0,121.8 105.5,121.7 105.0,121.6 104.5,121.5 104.0,121.4 103.5,121.2 103.0,121.0 102.5,120.8 102.0,120.5 101.5,120.2 101.0,119.9 100.5,119.6 100.0,119.2 99.5,118.7 99.0,118.2 98.5,117.8 98.0,118.2 97.5,118.6 97.0,119.0 96.5,119.3 96.0,119.7 95.5,120.0 95.0,120.4 94.5,120.7 94.0,121.0 93.5,121.3 93.0,121.6 92.5,121.9 92.0,122.1 91.5,122.3 91.0,122.5 90.5,122.7 90.0,122.8 89.5,122.9 89.0,123.0 88.5,123.1 88.0,123.1 87.5,123.1 87.0,123.0 86.5,122.9 86.0,122.8 85.5,122.6 85.0,122.4 84.5,122.1 84.0,121.8 83.5,121.5 83.0,121.0 82.5,120.6 82.0,120.0 81.5,119.7 81.0,120.1 80.5,120.5 80.0,120.9 79.5,121.3 79.0,121.7 78.5,122.1 78.0,122.4 77.5,122.8 77.0,123.2 76.5,123.5 76.0,123.8 75.5,124.1 75.0,124.4 74.5,124.6 74.0,124.8 73.5,125.0 73.0,125.2 72.5,125.3 72.0,125.4 71.5,125.5 71.0,125.5 70.5,125.5 70.0,125.4 69.5,125.4 69.0,125.2 68.5,125.1 68.0,124.8 67.5,124.6 67.0,124.3 66.5,123.9 66.0,123.4 65.5,123.1 65.0,123.5 64.5,123.9 64.0,124.3 63.5,124.6 63.0,125.0 62.5,125.4 62.0,125.7 61.5,126.1 61.0,126.4 60.5,126.8 60.0,127.1 59.5,127.4 59.0,127.7 58.5,128.0 58.0,128.3 57.5,128.6 57.0,128.9 56.5,129.1 56.0,129.4 55.5,129.6 55.0,129.8 54.5,130.0 54.0,130.1 53.5,130.3 53.0,130.4 52.5,130.5 52.0,130.6 51.5,130.7 51.0,130.7 50.5,130.8 50.0,130.8 49.5,130.8 49.0,130.7 48.5,130.6 48.0,130.5 47.5,130.4 47.0,130.3 46.5,130.1 46.0,129.9 45.5,129.6 45.0,129.3 44.5,129.1 44.0,129.5 43.5,129.9 43.0,130.2 42.5,130.6 42.0,130.9 41.5,131.3 41.0,131.6 40.5,132.0 40.0,132.3 39.5,132.6 39.0,132.9 38.5,133.2 38.0,133.5 37.5,133.8 37.0,134.0 36.5,134.3 36.0,134.5 35.5,134.7 35.0,134.9 34.5,135.0 34.0,135.2 33.5,135.3 33.0,135.4 32.5,135.4 32.0,135.5 31.5,135.5 31.0,135.5 30.5,135.4 30.0,135.4 29.5,135.3 29.0,135.1 28.5,135.0 28.0,134.8 27.5,134.5 27.0,134.3 26.5,134.0 26.0,133.6 25.5,133.2 25.0,132.7 24.5,132.7 24.0,133.0 23.5,133.3 23.0,133.5 22.5,133.8 22.0,134.1 21.5,134.3 21.0,134.6 20.5,134.8 20.0,135.0 19.5,135.2 19.0,135.4 18.5,135.6 18.0,135.7 17.5,135.9 17.0,136.0 16.5,136.0 16.0,136.1 15.5,136.1 15.0,136.1 14.5,136.0 14.0,136.0 13.5,135.9 13.0,135.7 12.5,135.5 12.0,135.3 11.5,135.1 11.0,134.8 10.5,134.5 10.0,134.1 9.5,133.6 9.0,133.0 8.5,133.4 8.0,133.8 7.5,134.2 7.0,134.6 6.5,134.9 6.0,135.2 5.5,135.5 5.0,135.8 4.5,135.9 4.0,136.0 3.5,136.1 3.0,136.1 2.5,136.0 2.0,135.8 1.5,135.5 1.0,135.1 0.5,134.7" fill="#78ecea"/><line x1="2.5" y1="130.0" x2="2.5" y2="134.0" stroke="#0a3a3a" stroke-width="0.6"/><line x1="5.5" y1="129.9" x2="5.5" y2="133.9" stroke="#0a3a3a" stroke-width="0.6"/><line x1="13.8" y1="127.4" x2="13.8" y2="133.8" stroke="#0a3a3a" stroke-width="0.6"/><line x1="18.9" y1="127.3" x2="18.9" y2="133.7" stroke="#0a3a3a" stroke-width="0.6"/><line x1="30.8" y1="126.0" x2="30.8" y2="133.0" stroke="#0a3a3a" stroke-width="0.6"/><line x1="37.2" y1="124.9" x2="37.2" y2="131.9" stroke="#0a3a3a" stroke-width="0.6"/><line x1="51.0" y1="121.1" x2="51.0" y2="128.5" stroke="#0a3a3a" stroke-width="0.6"/><line x1="57.7" y1="119.2" x2="57.7" y2="126.6" stroke="#0a3a3a" stroke-width="0.6"/><line x1="70.5" y1="116.2" x2="70.5" y2="123.2" stroke="#0a3a3a" stroke-width="0.6"/><line x1="75.6" y1="115.1" x2="75.6" y2="122.1" stroke="#0a3a3a" stroke-width="0.6"/><line x1="86.8" y1="112.9" x2="86.8" y2="120.6" stroke="#0a3a3a" stroke-width="0.6"/><line x1="92.2" y1="112.3" x2="92.2" y2="120.0" stroke="#0a3a3a" stroke-width="0.6"/><line x1="105.2" y1="110.7" x2="105.2" y2="119.1" stroke="#0a3a3a" stroke-width="0.6"/><line x1="112.1" y1="110.2" x2="112.1" y2="118.5" stroke="#0a3a3a" stroke-width="0.6"/><line x1="126.3" y1="109.9" x2="126.3" y2="117.9" stroke="#0a3a3a" stroke-width="0.6"/><line x1="132.6" y1="109.9" x2="132.6" y2="117.9" stroke="#0a3a3a" stroke-width="0.6"/><line x1="146.7" y1="111.1" x2="146.7" y2="118.1" stroke="#0a3a3a" stroke-width="0.6"/><line x1="153.7" y1="111.7" x2="153.7" y2="118.7" stroke="#0a3a3a" stroke-width="0.6"/><line x1="168.6" y1="115.0" x2="168.6" y2="121.0" stroke="#0a3a3a" stroke-width="0.6"/><line x1="175.7" y1="117.2" x2="175.7" y2="123.2" stroke="#0a3a3a" stroke-width="0.6"/><line x1="190.3" y1="120.3" x2="190.3" y2="127.0" stroke="#0a3a3a" stroke-width="0.6"/><line x1="196.8" y1="121.3" x2="196.8" y2="128.0" stroke="#0a3a3a" stroke-width="0.6"/><line x1="211.1" y1="123.6" x2="211.1" y2="129.9" stroke="#0a3a3a" stroke-width="0.6"/><line x1="218.0" y1="124.4" x2="218.0" y2="130.7" stroke="#0a3a3a" stroke-width="0.6"/><line x1="230.4" y1="126.2" x2="230.4" y2="132.1" stroke="#0a3a3a" stroke-width="0.6"/><line x1="234.9" y1="126.6" x2="234.9" y2="132.6" stroke="#0a3a3a" stroke-width="0.6"/></svg>
<div class="t" style="right:536px;top:61.5px;font-size:5.5px;line-height:7.5px;color:#e8f4f4;text-align:right;">4.878</div>
<div class="t" style="right:536px;top:77.1px;font-size:5.5px;line-height:7.5px;color:#e8f4f4;text-align:right;">4.6</div>
<div class="t" style="right:536px;top:88.5px;font-size:5.5px;line-height:7.5px;color:#e8f4f4;text-align:right;">4.4</div>
<div class="t" style="right:536px;top:99.9px;font-size:5.5px;line-height:7.5px;color:#e8f4f4;text-align:right;">4.2</div>
<div class="t" style="right:536px;top:111.3px;font-size:5.5px;line-height:7.5px;color:#e8f4f4;text-align:right;">4</div>
<div class="t" style="right:536px;top:122.7px;font-size:5.5px;line-height:7.5px;color:#e8f4f4;text-align:right;">3.8</div>
<div class="t" style="right:536px;top:134.0px;font-size:5.5px;line-height:7.5px;color:#e8f4f4;text-align:right;">3.6</div>
<div class="t" style="right:536px;top:145.4px;font-size:5.5px;line-height:7.5px;color:#e8f4f4;text-align:right;">3.4</div>
<div class="t" style="right:536px;top:156.8px;font-size:5.5px;line-height:7.5px;color:#e8f4f4;text-align:right;">3.2</div>
<div class="t" style="right:536px;top:168.2px;font-size:5.5px;line-height:7.5px;color:#e8f4f4;text-align:right;">3</div>
<div class="t" style="right:536px;top:179.6px;font-size:5.5px;line-height:7.5px;color:#e8f4f4;text-align:right;">2.8</div>
<div class="t" style="right:536px;top:196.2px;font-size:5.5px;line-height:7.5px;color:#e8f4f4;text-align:right;">2.508</div>
<div class="t" style="left:175.6px;top:128.25px;width:40px;height:7.5px;font-size:5.5px;line-height:7.5px;color:#e8f4f4;text-align:center;transform:rotate(-90deg);">K</div>
<svg style="left:217.3px;top:203px" width="239.7" height="130.7"><polyline points="0.0,80.9 161.5,0.0 163.7,-2.0" fill="none" stroke="#8c9ad8" stroke-width="1.1"/><polyline points="0.0,80.9 124.3,24.2 239.7,24.2" fill="none" stroke="#5cb84c" stroke-width="1.1"/><polyline points="175.9,87.0 194.5,53.2 204.0,53.2 211.1,43.7 239.7,43.7" fill="none" stroke="#c05050" stroke-width="1.1"/><polyline points="0.0,87.0 175.9,87.0 194.5,120.2 204.9,120.2 211.1,131.5 237.9,87.0 239.7,85.0" fill="none" stroke="#e8e8e8" stroke-width="1.1"/></svg>
<div class="t" style="right:536px;top:217.7px;font-size:5.5px;line-height:7.5px;color:#e8f4f4;text-align:right;">80</div>
<div class="t" style="right:536px;top:235.1px;font-size:5.5px;line-height:7.5px;color:#e8f4f4;text-align:right;">60</div>
<div class="t" style="right:536px;top:252.5px;font-size:5.5px;line-height:7.5px;color:#e8f4f4;text-align:right;">40</div>
<div class="t" style="right:536px;top:270.0px;font-size:5.5px;line-height:7.5px;color:#e8f4f4;text-align:right;">20</div>
<div class="t" style="right:536px;top:287.4px;font-size:5.5px;line-height:7.5px;color:#e8f4f4;text-align:right;">0</div>
<div class="t" style="right:536px;top:304.8px;font-size:5.5px;line-height:7.5px;color:#e8f4f4;text-align:right;">-20</div>
<div class="t" style="right:536px;top:322.2px;font-size:5.5px;line-height:7.5px;color:#e8f4f4;text-align:right;">-40</div>
<div class="t" style="right:536px;top:199.2px;font-size:5px;line-height:7px;color:#e8f4f4;text-align:right;">100.032</div>
<div class="t" style="right:536px;top:194.8px;font-size:5px;line-height:7px;color:#e8f4f4;text-align:right;">2.508</div>
<div class="t" style="right:536px;top:329.3px;font-size:5px;line-height:7px;color:#e8f4f4;text-align:right;">-50</div>
<div class="t" style="right:536px;top:335.1px;font-size:5px;line-height:7px;color:#e8f4f4;text-align:right;">5044.49</div>
<div class="t" style="left:171.5px;top:264.85px;width:40px;height:7.5px;font-size:5.5px;line-height:7.5px;color:#e8f4f4;text-align:center;transform:rotate(-90deg);">A</div>
<svg style="left:217.3px;top:338px" width="239.7" height="130"><polyline points="0.0,85.8 44.7,85.8 82.7,83.0 142.7,79.0 175.9,77.5" fill="none" stroke="#2d7a2d" stroke-width="1.1"/><polyline points="0.0,85.0 44.7,85.5 57.7,85.0 112.7,79.0 162.7,74.5 175.9,74.5 194.5,23.0 202.7,22.0 213.1,0.3 239.7,33.3" fill="none" stroke="#5cb84c" stroke-width="1.1"/><polyline points="0.0,84.8 40.7,84.8 48.7,86.5 62.7,85.0 112.7,78.0 162.7,73.0 175.9,72.8 194.5,24.0 203.7,23.5 211.3,7.7 239.7,34.5" fill="none" stroke="#e0e0e0" stroke-width="1.1"/><polyline points="0.0,84.5 10.7,84.5 18.7,83.0 30.7,83.5 44.7,85.0 82.7,81.0 142.7,75.0 175.9,72.8" fill="none" stroke="#c06050" stroke-width="1.1"/><polyline points="175.9,73.0 194.5,115.2 203.7,115.2 213.1,124.3 239.7,108.6" fill="none" stroke="#e8e8e8" stroke-width="1.1"/><polyline points="175.9,74.0 194.5,123.5 203.7,123.8 210.7,130.5 239.7,114.0" fill="none" stroke="#c03030" stroke-width="1.1"/></svg>
<div class="t" style="right:536px;top:353.1px;font-size:5.5px;line-height:7.5px;color:#e8f4f4;text-align:right;">4000</div>
<div class="t" style="right:536px;top:370.3px;font-size:5.5px;line-height:7.5px;color:#e8f4f4;text-align:right;">3000</div>
<div class="t" style="right:536px;top:387.4px;font-size:5.5px;line-height:7.5px;color:#e8f4f4;text-align:right;">2000</div>
<div class="t" style="right:536px;top:404.5px;font-size:5.5px;line-height:7.5px;color:#e8f4f4;text-align:right;">1000</div>
<div class="t" style="right:536px;top:421.6px;font-size:5.5px;line-height:7.5px;color:#e8f4f4;text-align:right;">0</div>
<div class="t" style="right:536px;top:438.8px;font-size:5.5px;line-height:7.5px;color:#e8f4f4;text-align:right;">-1000</div>
<div class="t" style="right:536px;top:455.9px;font-size:5.5px;line-height:7.5px;color:#e8f4f4;text-align:right;">-2000</div>
<div class="t" style="right:534px;top:464.8px;font-size:5.5px;line-height:7.5px;color:#e8f4f4;text-align:right;">-2547.53</div>
<div class="t" style="left:168.6px;top:400.25px;width:40px;height:7.5px;font-size:5.5px;line-height:7.5px;color:#e8f4f4;text-align:center;transform:rotate(-90deg);">Newtons</div>
<div class="t" style="left:250.1465901710327px;top:467.6px;width:30px;font-size:5.5px;line-height:7.5px;color:#e8f4f4;text-align:center;">10:30:00</div>
<div class="t" style="left:281.28319982680233px;top:467.6px;width:30px;font-size:5.5px;line-height:7.5px;color:#e8f4f4;text-align:center;">10:40:00</div>
<div class="t" style="left:312.41980948257196px;top:467.6px;width:30px;font-size:5.5px;line-height:7.5px;color:#e8f4f4;text-align:center;">10:50:00</div>
<div class="t" style="left:343.55641913834165px;top:467.6px;width:30px;font-size:5.5px;line-height:7.5px;color:#e8f4f4;text-align:center;">11:00:00</div>
<div class="t" style="left:374.6930287941113px;top:467.6px;width:30px;font-size:5.5px;line-height:7.5px;color:#e8f4f4;text-align:center;">11:10:00</div>
<div class="t" style="left:405.8296384498809px;top:467.6px;width:30px;font-size:5.5px;line-height:7.5px;color:#e8f4f4;text-align:center;">11:20:00</div>
<div class="t" style="left:209px;top:467.6px;font-size:5.5px;line-height:7.5px;color:#e8f4f4;">10:14:38</div>
<div class="t" style="left:442.0px;top:467.6px;width:30px;font-size:5.5px;line-height:7.5px;color:#e8f4f4;text-align:center;">11:31:37</div>
<div class="t" style="left:322.0px;top:474.8px;width:30px;font-size:5.5px;line-height:7.5px;color:#e8f4f4;text-align:center;">Time</div>
<div style="left:477px;top:62.599999999999994px;width:5.5px;height:5.5px;background:#fcfcfc;border:0.5px solid #d8d8d8;"></div>
<svg style="left:477.5px;top:63.1px" width="5" height="5"><path d="M0.8 2.5 L2 3.8 L4.3 1" fill="none" stroke="#555" stroke-width="0.8"/></svg>
<div class="t" style="left:485.5px;top:62.6px;font-size:5.6px;line-height:7.6px;color:#082424;letter-spacing:-0.15px;">Magnet1</div>
<div style="left:477px;top:72.97px;width:5.5px;height:5.5px;background:#fcfcfc;border:0.5px solid #d8d8d8;"></div>
<svg style="left:477.5px;top:73.5px" width="5" height="5"><path d="M0.8 2.5 L2 3.8 L4.3 1" fill="none" stroke="#555" stroke-width="0.8"/></svg>
<div class="t" style="left:485.5px;top:73.0px;font-size:5.6px;line-height:7.6px;color:#082424;letter-spacing:-0.15px;">Magnet2</div>
<div style="left:477px;top:83.33999999999999px;width:5.5px;height:5.5px;background:#fcfcfc;border:0.5px solid #d8d8d8;"></div>
<svg style="left:477.5px;top:83.8px" width="5" height="5"><path d="M0.8 2.5 L2 3.8 L4.3 1" fill="none" stroke="#555" stroke-width="0.8"/></svg>
<div class="t" style="left:485.5px;top:83.3px;font-size:5.6px;line-height:7.6px;color:#082424;letter-spacing:-0.15px;">Magnet3</div>
<div style="left:477px;top:93.71px;width:5.5px;height:5.5px;background:#fcfcfc;border:0.5px solid #d8d8d8;"></div>
<svg style="left:477.5px;top:94.2px" width="5" height="5"><path d="M0.8 2.5 L2 3.8 L4.3 1" fill="none" stroke="#555" stroke-width="0.8"/></svg>
<div class="t" style="left:485.5px;top:93.7px;font-size:5.6px;line-height:7.6px;color:#082424;letter-spacing:-0.15px;">Magnet4</div>
<div style="left:477px;top:104.07999999999998px;width:5.5px;height:5.5px;background:#fcfcfc;border:0.5px solid #d8d8d8;"></div>
<div class="t" style="left:485.5px;top:104.1px;font-size:5.6px;line-height:7.6px;color:#082424;letter-spacing:-0.15px;">1st Stage A</div>
<div style="left:477px;top:114.44999999999999px;width:5.5px;height:5.5px;background:#fcfcfc;border:0.5px solid #d8d8d8;"></div>
<div class="t" style="left:485.5px;top:114.4px;font-size:5.6px;line-height:7.6px;color:#082424;letter-spacing:-0.15px;">2nd Stage A</div>
<div style="left:477px;top:124.82px;width:5.5px;height:5.5px;background:#fcfcfc;border:0.5px solid #d8d8d8;"></div>
<div class="t" style="left:485.5px;top:124.8px;font-size:5.6px;line-height:7.6px;color:#082424;letter-spacing:-0.15px;">1st Stage B</div>
<div style="left:477px;top:135.19px;width:5.5px;height:5.5px;background:#fcfcfc;border:0.5px solid #d8d8d8;"></div>
<div class="t" style="left:485.5px;top:135.2px;font-size:5.6px;line-height:7.6px;color:#082424;letter-spacing:-0.15px;">2nd Stage B</div>
<div style="left:477px;top:145.56px;width:5.5px;height:5.5px;background:#fcfcfc;border:0.5px solid #d8d8d8;"></div>
<div class="t" style="left:485.5px;top:145.6px;font-size:5.6px;line-height:7.6px;color:#082424;letter-spacing:-0.15px;">1st Stage C</div>
<div style="left:477px;top:155.93px;width:5.5px;height:5.5px;background:#fcfcfc;border:0.5px solid #d8d8d8;"></div>
<svg style="left:477.5px;top:156.4px" width="5" height="5"><path d="M0.8 2.5 L2 3.8 L4.3 1" fill="none" stroke="#555" stroke-width="0.8"/></svg>
<div class="t" style="left:485.5px;top:155.9px;font-size:5.6px;line-height:7.6px;color:#082424;letter-spacing:-0.15px;">2nd Stage C</div>
<div style="left:477px;top:166.29999999999998px;width:5.5px;height:5.5px;background:#fcfcfc;border:0.5px solid #d8d8d8;"></div>
<div class="t" style="left:485.5px;top:166.3px;font-size:5.6px;line-height:7.6px;color:#082424;letter-spacing:-0.15px;">1st Stage D</div>
<div style="left:477px;top:176.67px;width:5.5px;height:5.5px;background:#fcfcfc;border:0.5px solid #d8d8d8;"></div>
<div class="t" style="left:485.5px;top:176.7px;font-size:5.6px;line-height:7.6px;color:#082424;letter-spacing:-0.15px;">2nd Stage D</div>
<div style="left:477px;top:187.04px;width:5.5px;height:5.5px;background:#fcfcfc;border:0.5px solid #d8d8d8;"></div>
<svg style="left:477.5px;top:187.5px" width="5" height="5"><path d="M0.8 2.5 L2 3.8 L4.3 1" fill="none" stroke="#555" stroke-width="0.8"/></svg>
<div class="t" style="left:485.5px;top:187.0px;font-size:5.6px;line-height:7.6px;color:#082424;letter-spacing:-0.15px;">Magnet 1</div>
<div style="left:477px;top:197.41px;width:5.5px;height:5.5px;background:#fcfcfc;border:0.5px solid #d8d8d8;"></div>
<svg style="left:477.5px;top:197.9px" width="5" height="5"><path d="M0.8 2.5 L2 3.8 L4.3 1" fill="none" stroke="#555" stroke-width="0.8"/></svg>
<div class="t" style="left:485.5px;top:197.4px;font-size:5.6px;line-height:7.6px;color:#082424;letter-spacing:-0.15px;">Magnet 2</div>
<div style="left:477px;top:207.77999999999997px;width:5.5px;height:5.5px;background:#fcfcfc;border:0.5px solid #d8d8d8;"></div>
<svg style="left:477.5px;top:208.3px" width="5" height="5"><path d="M0.8 2.5 L2 3.8 L4.3 1" fill="none" stroke="#555" stroke-width="0.8"/></svg>
<div class="t" style="left:485.5px;top:207.8px;font-size:5.6px;line-height:7.6px;color:#082424;letter-spacing:-0.15px;">Magnet 3</div>
<div style="left:477px;top:218.14999999999998px;width:5.5px;height:5.5px;background:#fcfcfc;border:0.5px solid #d8d8d8;"></div>
<svg style="left:477.5px;top:218.6px" width="5" height="5"><path d="M0.8 2.5 L2 3.8 L4.3 1" fill="none" stroke="#555" stroke-width="0.8"/></svg>
<div class="t" style="left:485.5px;top:218.1px;font-size:5.6px;line-height:7.6px;color:#082424;letter-spacing:-0.15px;">Magnet 4</div>
<div style="left:477px;top:228.51999999999998px;width:5.5px;height:5.5px;background:#fcfcfc;border:0.5px solid #d8d8d8;"></div>
<svg style="left:477.5px;top:229.0px" width="5" height="5"><path d="M0.8 2.5 L2 3.8 L4.3 1" fill="none" stroke="#555" stroke-width="0.8"/></svg>
<div class="t" style="left:485.5px;top:228.5px;font-size:5.6px;line-height:7.6px;color:#082424;letter-spacing:-0.15px;">N2 Output</div>
<div style="left:477px;top:238.89px;width:5.5px;height:5.5px;background:#fcfcfc;border:0.5px solid #d8d8d8;"></div>
<div class="t" style="left:485.5px;top:238.9px;font-size:5.6px;line-height:7.6px;color:#082424;letter-spacing:-0.15px;">Rad Shield Cent</div>
<div style="left:477px;top:249.26px;width:5.5px;height:5.5px;background:#fcfcfc;border:0.5px solid #d8d8d8;"></div>
<div class="t" style="left:485.5px;top:249.3px;font-size:5.6px;line-height:7.6px;color:#082424;letter-spacing:-0.15px;">Rad Shield Bore</div>
<div style="left:477px;top:259.63px;width:5.5px;height:5.5px;background:#fcfcfc;border:0.5px solid #d8d8d8;"></div>
<svg style="left:477.5px;top:260.1px" width="5" height="5"><path d="M0.8 2.5 L2 3.8 L4.3 1" fill="none" stroke="#555" stroke-width="0.8"/></svg>
<div class="t" style="left:485.5px;top:259.6px;font-size:5.6px;line-height:7.6px;color:#082424;letter-spacing:-0.15px;">Load Cell 1</div>
<div style="left:477px;top:270.0px;width:5.5px;height:5.5px;background:#fcfcfc;border:0.5px solid #d8d8d8;"></div>
<svg style="left:477.5px;top:270.5px" width="5" height="5"><path d="M0.8 2.5 L2 3.8 L4.3 1" fill="none" stroke="#555" stroke-width="0.8"/></svg>
<div class="t" style="left:485.5px;top:270.0px;font-size:5.6px;line-height:7.6px;color:#082424;letter-spacing:-0.15px;">Load Cell 2</div>
<div style="left:477px;top:280.37px;width:5.5px;height:5.5px;background:#fcfcfc;border:0.5px solid #d8d8d8;"></div>
<svg style="left:477.5px;top:280.9px" width="5" height="5"><path d="M0.8 2.5 L2 3.8 L4.3 1" fill="none" stroke="#555" stroke-width="0.8"/></svg>
<div class="t" style="left:485.5px;top:280.4px;font-size:5.6px;line-height:7.6px;color:#082424;letter-spacing:-0.15px;">Load Cell 3</div>
<div style="left:477px;top:290.74px;width:5.5px;height:5.5px;background:#fcfcfc;border:0.5px solid #d8d8d8;"></div>
<svg style="left:477.5px;top:291.2px" width="5" height="5"><path d="M0.8 2.5 L2 3.8 L4.3 1" fill="none" stroke="#555" stroke-width="0.8"/></svg>
<div class="t" style="left:485.5px;top:290.7px;font-size:5.6px;line-height:7.6px;color:#082424;letter-spacing:-0.15px;">Load Cell 4</div>
<div style="left:474.5px;top:420px;width:40px;height:11px;background:#8fcfcf;border:1px solid #b8e4e4;border-radius:1px;"></div>
<svg style="left:478px;top:422px" width="32" height="7"><rect x="1" y="0" width="8" height="7" fill="#cfdede"/><rect x="11" y="0" width="9" height="7" fill="#667"/><rect x="22" y="0" width="9" height="7" fill="#e5eaea"/><path d="M2 3.5 L8 3.5 M5 0.5 L5 6.5" stroke="#333" stroke-width="0.7"/></svg>
<div style="left:474px;top:432.3px;width:78px;height:37.4px;background:#6fbcbc;border:1px solid #b5e3e3;"></div>
<div style="left:479px;top:435.40000000000003px;width:30.3px;height:8.5px;background:#050505;border:0.5px solid #666;"></div>
<div class="t" style="left:480.5px;top:435.6px;font-size:6px;line-height:8px;color:#f0f0f0;">Time</div>
<svg style="left:512px;top:436.6px" width="27" height="7"><ellipse cx="2.5" cy="3.5" rx="2" ry="2.5" fill="#777"/><path d="M8 6 L13 6 M9 1 L9 6 M11 1 L12 6" stroke="#333" stroke-width="0.7"/><path d="M18 1 L23 1 M20 3 L22 3 M21 5 L22 6" stroke="#333" stroke-width="0.7"/></svg>
<div style="left:479px;top:447.6px;width:30.3px;height:8.5px;background:#050505;border:0.5px solid #666;"></div>
<div class="t" style="left:480.5px;top:447.8px;font-size:6px;line-height:8px;color:#f0f0f0;">K</div>
<svg style="left:512px;top:448.8px" width="27" height="7"><ellipse cx="2.5" cy="3.5" rx="2" ry="2.5" fill="#777"/><path d="M8 6 L13 6 M9 1 L9 6 M11 1 L12 6" stroke="#333" stroke-width="0.7"/><path d="M18 1 L23 1 M20 3 L22 3 M21 5 L22 6" stroke="#333" stroke-width="0.7"/></svg>
<div style="left:479px;top:459.5px;width:30.3px;height:8.5px;background:#050505;border:0.5px solid #666;"></div>
<div class="t" style="left:480.5px;top:459.7px;font-size:6px;line-height:8px;color:#f0f0f0;">A</div>
<svg style="left:512px;top:460.7px" width="27" height="7"><ellipse cx="2.5" cy="3.5" rx="2" ry="2.5" fill="#777"/><path d="M8 6 L13 6 M9 1 L9 6 M11 1 L12 6" stroke="#333" stroke-width="0.7"/><path d="M18 1 L23 1 M20 3 L22 3 M21 5 L22 6" stroke="#333" stroke-width="0.7"/></svg>
<div style="left:540.8px;top:433.5px;width:7px;height:35.5px;background:#d8d8d8;"></div>
<div style="left:541.3px;top:442px;width:6px;height:14px;background:#efefef;"></div>
<svg style="left:541px;top:435px" width="7" height="33"><path d="M1 5 L3.5 1 L6 5Z" fill="#111"/><path d="M1 27 L3.5 31 L6 27Z" fill="#111"/></svg>
<div style="left:553px;top:14px;width:197px;height:14.8px;background:#fff;"></div>
<svg style="left:557.5px;top:17.5px" width="8" height="8"><rect x="0" y="0" width="7.5" height="7.5" fill="#d0d0e8"/><rect x="0.6" y="0.6" width="6.3" height="2" fill="#4a8ed0"/><rect x="0.6" y="2.6" width="6.3" height="4.2" fill="#c2c23c"/><path d="M2 3 L5 4.5 L2.5 6.5Z" fill="#3a3a10"/><rect x="0.6" y="6" width="6.3" height="0.8" fill="#8a8ab0"/></svg>
<div class="t" style="left:567px;top:17.4px;font-size:6px;line-height:8px;color:#444;">Main UI.vi</div>
<div style="left:553px;top:28.8px;width:188px;height:417.2px;background:#20898a;"></div>
<div style="left:552.2px;top:28.8px;width:1.6px;height:417.2px;background:#1b7474;"></div>
<div style="left:557px;top:47px;width:1px;height:399px;background:#1a7272;"></div>
<div style="left:741px;top:28.8px;width:7.5px;height:417.2px;background:#d4d4d4;"></div>
<div style="left:741px;top:297px;width:7.5px;height:149px;background:#f2f2f2;"></div>
<div style="left:748.5px;top:28.8px;width:1.5px;height:417.2px;background:#222;"></div>
<div style="left:617px;top:34.2px;width:52.6px;height:12.5px;background:linear-gradient(#d0d0d8 0px,#9a9aa0 1.5px,#5a5a5e 4px,#3e3a3c);border:0.8px solid #c8d0d8;border-radius:2px;"></div>
<div class="t" style="left:613.3px;top:37.5px;width:60px;font-size:5.0px;line-height:7.0px;color:#f4f4f4;text-align:center;font-weight:bold;letter-spacing:-0.15px;">RAMP ALL TO ZERO</div>
<div style="left:560.8px;top:50px;width:9.5px;height:9px;background:#ddd6ef;border:0.5px solid #b4a8d8;"></div>
<svg style="left:561.5px;top:51.5px" width="8" height="6"><rect x="0.8" y="0.6" width="6.4" height="2.6" rx="1" fill="none" stroke="#7868a8" stroke-width="0.9"/><line x1="0.8" y1="5" x2="7.2" y2="5" stroke="#7868a8" stroke-width="0.9"/></svg>
<div class="t" style="left:574.5px;top:50.8px;font-size:6.0px;line-height:8.0px;color:#0a1f33;font-weight:bold;">Magnet1</div>
<div class="t" style="left:561.6px;top:69.5px;font-size:8.5px;line-height:10.5px;color:#d6e04a;font-weight:bold;letter-spacing:-0.25px;">Shim2</div>
<div class="t" style="right:157.5px;top:84.2px;font-size:5.3px;line-height:7.3px;color:#d6e04a;text-align:right;">Magnet Field</div>
<div class="t" style="right:157.5px;top:96.7px;font-size:5.3px;line-height:7.3px;color:#d6e04a;text-align:right;">Voltage</div>
<div style="left:594.5px;top:83.3px;width:44.3px;height:8px;background:#100b10;"></div>
<div class="t" style="left:596.0px;top:83.0px;font-size:7px;line-height:9px;color:#f0f0f0;letter-spacing:-0.42px;">-0.00180000</div>
<div style="left:594.5px;top:95.8px;width:44.3px;height:8px;background:#100b10;"></div>
<div class="t" style="left:596.0px;top:95.5px;font-size:7px;line-height:9px;color:#f0f0f0;letter-spacing:-0.42px;">0.00</div>
<div class="t" style="right:78.5px;top:84.2px;font-size:5.3px;line-height:7.3px;color:#d6e04a;text-align:right;">PSU Output</div>
<div class="t" style="right:78.5px;top:96.7px;font-size:5.3px;line-height:7.3px;color:#d6e04a;text-align:right;">Ramp Rate</div>
<div style="left:673.4px;top:83.3px;width:44.3px;height:8px;background:#100b10;"></div>
<div class="t" style="right:33.80000000000007px;top:83.0px;font-size:7px;line-height:9px;color:#f0f0f0;text-align:right;letter-spacing:-0.42px;">0.00000000</div>
<div style="left:673.4px;top:95.8px;width:44.3px;height:8px;background:#100b10;"></div>
<div class="t" style="right:33.80000000000007px;top:95.5px;font-size:7px;line-height:9px;color:#f0f0f0;text-align:right;letter-spacing:-0.42px;">0.10700</div>
<div style="left:558px;top:130.6px;width:183px;height:1px;background:#146665;"></div>
<div style="left:558px;top:131.6px;width:183px;height:10px;background:#1e8a89;"></div>
<div class="t" style="left:561.3px;top:132.9px;font-size:5.4px;line-height:7.4px;color:#eef8f8;">11:31:36 Update Output</div>
<div style="left:560.8px;top:157px;width:9.5px;height:9px;background:#ddd6ef;border:0.5px solid #b4a8d8;"></div>
<svg style="left:561.5px;top:158.5px" width="8" height="6"><rect x="0.8" y="0.6" width="6.4" height="2.6" rx="1" fill="none" stroke="#7868a8" stroke-width="0.9"/><line x1="0.8" y1="5" x2="7.2" y2="5" stroke="#7868a8" stroke-width="0.9"/></svg>
<div class="t" style="left:574.5px;top:157.8px;font-size:6.0px;line-height:8.0px;color:#0a1f33;font-weight:bold;">Magnet2</div>
<div class="t" style="left:561.6px;top:177.1px;font-size:8.5px;line-height:10.5px;color:#d6e04a;font-weight:bold;letter-spacing:-0.25px;">Shim1</div>
<div class="t" style="right:157.5px;top:191.5px;font-size:5.3px;line-height:7.3px;color:#d6e04a;text-align:right;">Magnet Field</div>
<div class="t" style="right:157.5px;top:204.2px;font-size:5.3px;line-height:7.3px;color:#d6e04a;text-align:right;">Voltage</div>
<div style="left:594.5px;top:190.6px;width:44.3px;height:8px;background:#100b10;"></div>
<div class="t" style="left:596.0px;top:190.3px;font-size:7px;line-height:9px;color:#f0f0f0;letter-spacing:-0.42px;">50.07300000</div>
<div style="left:594.5px;top:203.3px;width:44.3px;height:8px;background:#100b10;"></div>
<div class="t" style="left:596.0px;top:203.0px;font-size:7px;line-height:9px;color:#f0f0f0;letter-spacing:-0.42px;">1.00</div>
<div class="t" style="right:78.5px;top:191.5px;font-size:5.3px;line-height:7.3px;color:#d6e04a;text-align:right;">PSU Output</div>
<div class="t" style="right:78.5px;top:204.2px;font-size:5.3px;line-height:7.3px;color:#d6e04a;text-align:right;">Ramp Rate</div>
<div style="left:673.4px;top:190.6px;width:44.3px;height:8px;background:#100b10;"></div>
<div class="t" style="right:33.80000000000007px;top:190.3px;font-size:7px;line-height:9px;color:#f0f0f0;text-align:right;letter-spacing:-0.42px;">50.07300000</div>
<div style="left:673.4px;top:203.3px;width:44.3px;height:8px;background:#100b10;"></div>
<div class="t" style="right:33.80000000000007px;top:203.0px;font-size:7px;line-height:9px;color:#f0f0f0;text-align:right;letter-spacing:-0.42px;">0.10700</div>
<div style="left:672.6px;top:218.4px;width:44.4px;height:14.8px;background:linear-gradient(#b8b8b8,#555);border:1px solid #ddd;border-radius:2px;"></div>
<svg style="left:676px;top:221.4px" width="10" height="9"><circle cx="5" cy="4.5" r="4.3" fill="#d42a2a"/><path d="M3 2.5 L7 6.5 M7 2.5 L3 6.5" stroke="#fff" stroke-width="1"/></svg>
<div class="t" style="left:685.0px;top:222.1px;width:30px;font-size:5.5px;line-height:7.5px;color:#eee;text-align:center;font-weight:bold;">ABORT</div>
<div style="left:558px;top:237.8px;width:183px;height:1px;background:#146665;"></div>
<div style="left:558px;top:238.8px;width:183px;height:10px;background:#1e8a89;"></div>
<div class="t" style="left:561.3px;top:240.1px;font-size:5.4px;line-height:7.4px;color:#eef8f8;">11:31:38 Ramping Magnet to 60.00 (A)</div>
<div style="left:560.8px;top:262.8px;width:9.5px;height:9px;background:#ddd6ef;border:0.5px solid #b4a8d8;"></div>
<svg style="left:561.5px;top:264.3px" width="8" height="6"><rect x="0.8" y="0.6" width="6.4" height="2.6" rx="1" fill="none" stroke="#7868a8" stroke-width="0.9"/><line x1="0.8" y1="5" x2="7.2" y2="5" stroke="#7868a8" stroke-width="0.9"/></svg>
<div class="t" style="left:574.5px;top:263.6px;font-size:6.0px;line-height:8.0px;color:#0a1f33;font-weight:bold;">Magnet3</div>
<div style="left:707.3px;top:262.8px;width:10.2px;height:9.5px;background:#8c88c0;"></div>
<svg style="left:709px;top:264.8px" width="7" height="6"><path d="M0 3 L4 3 M2 1 L4 3 L2 5 M5 1 L5 5" stroke="#223" stroke-width="0.9" fill="none"/></svg>
<div style="left:722px;top:262.8px;width:10px;height:9.5px;background:#8c88c0;"></div>
<svg style="left:724px;top:265.8px" width="6" height="4"><path d="M0 0 L6 0 L3 3.5Z" fill="#fff"/></svg>
<div class="t" style="left:561.6px;top:283.2px;font-size:8.5px;line-height:10.5px;color:#d6e04a;font-weight:bold;letter-spacing:-0.25px;">Comp</div>
<div class="t" style="right:157.5px;top:297.7px;font-size:5.3px;line-height:7.3px;color:#d6e04a;text-align:right;">Magnet Field</div>
<div class="t" style="right:157.5px;top:310.2px;font-size:5.3px;line-height:7.3px;color:#d6e04a;text-align:right;">Voltage</div>
<div style="left:594.5px;top:296.7px;width:44.3px;height:8px;background:#100b10;"></div>
<div class="t" style="left:596.0px;top:296.4px;font-size:7px;line-height:9px;color:#f0f0f0;letter-spacing:-0.42px;">71.94210000</div>
<div style="left:594.5px;top:309.2px;width:44.3px;height:8px;background:#100b10;"></div>
<div class="t" style="left:596.0px;top:308.9px;font-size:7px;line-height:9px;color:#f0f0f0;letter-spacing:-0.42px;">0.60</div>
<div class="t" style="right:78.5px;top:297.7px;font-size:5.3px;line-height:7.3px;color:#d6e04a;text-align:right;">PSU Output</div>
<div class="t" style="right:78.5px;top:310.2px;font-size:5.3px;line-height:7.3px;color:#d6e04a;text-align:right;">Ramp Rate</div>
<div style="left:673.4px;top:296.7px;width:44.3px;height:8px;background:#100b10;"></div>
<div class="t" style="right:33.80000000000007px;top:296.4px;font-size:7px;line-height:9px;color:#f0f0f0;text-align:right;letter-spacing:-0.42px;">71.94210000</div>
<div style="left:673.4px;top:309.2px;width:44.3px;height:8px;background:#100b10;"></div>
<div class="t" style="right:33.80000000000007px;top:308.9px;font-size:7px;line-height:9px;color:#f0f0f0;text-align:right;letter-spacing:-0.42px;">0.02800</div>
<div style="left:671.3px;top:283.3px;width:44.7px;height:8px;background:linear-gradient(90deg,#49b5b5,#1a7575 40%,#1a6f6f);border:0.5px solid #0f5050;"></div>
<div class="t" style="left:673.6px;top:283.7px;width:40px;font-size:5.3px;line-height:7.3px;color:#0a3a3a;text-align:center;">READY</div>
<div style="left:672.6px;top:324px;width:44.4px;height:14px;background:linear-gradient(#3a9d9d,#227f80);border:0.5px solid #4aa8a8;border-radius:2px;"></div>
<svg style="left:676px;top:327.0px" width="10" height="9"><circle cx="5" cy="4.5" r="4.3" fill="#4e9a9a"/><path d="M3 2.5 L7 6.5 M7 2.5 L3 6.5" stroke="#9dd" stroke-width="1"/></svg>
<div class="t" style="left:685.0px;top:327.2px;width:30px;font-size:5.5px;line-height:7.5px;color:#5fb0b0;text-align:center;font-weight:bold;">ABORT</div>
<div style="left:558px;top:344px;width:183px;height:1px;background:#146665;"></div>
<div style="left:558px;top:345px;width:183px;height:10px;background:#1e8a89;"></div>
<div class="t" style="left:561.3px;top:346.3px;font-size:5.4px;line-height:7.4px;color:#eef8f8;">11:31:37 Update Output</div>
<div style="left:560.8px;top:370.7px;width:9.5px;height:9px;background:#ddd6ef;border:0.5px solid #b4a8d8;"></div>
<svg style="left:561.5px;top:372.2px" width="8" height="6"><rect x="0.8" y="0.6" width="6.4" height="2.6" rx="1" fill="none" stroke="#7868a8" stroke-width="0.9"/><line x1="0.8" y1="5" x2="7.2" y2="5" stroke="#7868a8" stroke-width="0.9"/></svg>
<div class="t" style="left:574.5px;top:371.5px;font-size:6.0px;line-height:8.0px;color:#0a1f33;font-weight:bold;">Magnet4</div>
<div style="left:707.3px;top:370.7px;width:10.2px;height:9.5px;background:#8c88c0;"></div>
<svg style="left:709px;top:372.7px" width="7" height="6"><path d="M0 3 L4 3 M2 1 L4 3 L2 5 M5 1 L5 5" stroke="#223" stroke-width="0.9" fill="none"/></svg>
<div style="left:722px;top:370.7px;width:10px;height:9.5px;background:#8c88c0;"></div>
<svg style="left:724px;top:373.7px" width="6" height="4"><path d="M0 0 L6 0 L3 3.5Z" fill="#fff"/></svg>
<div class="t" style="left:561.6px;top:390.6px;font-size:8.5px;line-height:10.5px;color:#d6e04a;font-weight:bold;letter-spacing:-0.25px;">Main</div>
<div class="t" style="right:157.5px;top:405.0px;font-size:5.3px;line-height:7.3px;color:#d6e04a;text-align:right;">Magnet Field</div>
<div class="t" style="right:157.5px;top:417.5px;font-size:5.3px;line-height:7.3px;color:#d6e04a;text-align:right;">Voltage</div>
<div style="left:594.5px;top:404px;width:44.3px;height:8px;background:#100b10;"></div>
<div class="t" style="left:596.0px;top:403.7px;font-size:7px;line-height:9px;color:#f0f0f0;letter-spacing:-0.42px;">99.99190000</div>
<div style="left:594.5px;top:416.5px;width:44.3px;height:8px;background:#100b10;"></div>
<div class="t" style="left:596.0px;top:416.2px;font-size:7px;line-height:9px;color:#f0f0f0;letter-spacing:-0.42px;">1.20</div>
<div class="t" style="right:78.5px;top:405.0px;font-size:5.3px;line-height:7.3px;color:#d6e04a;text-align:right;">PSU Output</div>
<div class="t" style="right:78.5px;top:417.5px;font-size:5.3px;line-height:7.3px;color:#d6e04a;text-align:right;">Ramp Rate</div>
<div style="left:673.4px;top:404px;width:44.3px;height:8px;background:#100b10;"></div>
<div class="t" style="right:33.80000000000007px;top:403.7px;font-size:7px;line-height:9px;color:#f0f0f0;text-align:right;letter-spacing:-0.42px;">99.99190000</div>
<div style="left:673.4px;top:416.5px;width:44.3px;height:8px;background:#100b10;"></div>
<div class="t" style="right:33.80000000000007px;top:416.2px;font-size:7px;line-height:9px;color:#f0f0f0;text-align:right;letter-spacing:-0.42px;">0.03000</div>
<div style="left:671.3px;top:390.7px;width:44.7px;height:8px;background:linear-gradient(90deg,#49b5b5,#1a7575 40%,#1a6f6f);border:0.5px solid #0f5050;"></div>
<div class="t" style="left:673.6px;top:391.1px;width:40px;font-size:5.3px;line-height:7.3px;color:#0a3a3a;text-align:center;">READY</div>
<div style="left:672.6px;top:431.5px;width:44.4px;height:14px;background:linear-gradient(#3a9d9d,#227f80);border:0.5px solid #4aa8a8;border-radius:2px;"></div>
<svg style="left:676px;top:434.5px" width="10" height="9"><circle cx="5" cy="4.5" r="4.3" fill="#4e9a9a"/><path d="M3 2.5 L7 6.5 M7 2.5 L3 6.5" stroke="#9dd" stroke-width="1"/></svg>
<div class="t" style="left:685.0px;top:434.8px;width:30px;font-size:5.5px;line-height:7.5px;color:#5fb0b0;text-align:center;font-weight:bold;">ABORT</div>
<div style="left:672px;top:181.2px;width:44px;height:4.7px;background:linear-gradient(#f0d040,#c8a020);"></div>
<div class="t" style="left:679.0px;top:180.3px;width:30px;font-size:4.5px;line-height:6.5px;color:#553;text-align:center;">READY</div>
<div style="left:719.8px;top:183px;width:21px;height:67px;border-left:1px solid #1b7a7a;border-top:1px solid #1b7a7a;background:#228c8d;"></div>
<svg style="left:725px;top:206.0px" width="10" height="8"><path d="M1.5 0 L1.5 8" stroke="#b0dc3c" stroke-width="1"/><path d="M2.5 4 L6 0.8 L6 2.6 L9 2.6 L9 5.4 L6 5.4 L6 7.2Z" fill="#b0dc3c"/></svg>
<div style="left:719.8px;top:275.3px;width:21px;height:81.39999999999998px;border-left:1px solid #1b7a7a;border-top:1px solid #1b7a7a;background:#228c8d;"></div>
<svg style="left:725px;top:311.3px" width="10" height="8"><path d="M1.5 0 L1.5 8" stroke="#b0dc3c" stroke-width="1"/><path d="M2.5 4 L6 0.8 L6 2.6 L9 2.6 L9 5.4 L6 5.4 L6 7.2Z" fill="#b0dc3c"/></svg>
<div style="left:719.8px;top:384px;width:21px;height:62px;border-left:1px solid #1b7a7a;border-top:1px solid #1b7a7a;background:#228c8d;"></div>
<svg style="left:725px;top:419.5px" width="10" height="8"><path d="M1.5 0 L1.5 8" stroke="#b0dc3c" stroke-width="1"/><path d="M2.5 4 L6 0.8 L6 2.6 L9 2.6 L9 5.4 L6 5.4 L6 7.2Z" fill="#b0dc3c"/></svg>
<svg style="left:662px;top:220px" width="6" height="10"><path d="M0.5 0.5 L0.5 8 L2.3 6.3 L3.6 9 L4.6 8.5 L3.4 5.9 L5.6 5.9Z" fill="#fff" stroke="#000" stroke-width="0.6"/></svg>
<svg style="left:671px;top:4px" width="78" height="178" viewBox="0 0 78 178">
<defs><filter id="bl" x="-5%" y="-5%" width="110%" height="110%"><feGaussianBlur stdDeviation="0.6"/></filter>
<clipPath id="c1"><rect x="0" y="0" width="78" height="42.5"/></clipPath>
<clipPath id="c2"><rect x="0" y="42.5" width="78" height="46"/></clipPath>
<clipPath id="c3"><rect x="0" y="88.5" width="78" height="44.7"/></clipPath>
<clipPath id="c4"><rect x="0" y="133.2" width="78" height="44.3"/></clipPath>
</defs>
<g filter="url(#bl)">
<g clip-path="url(#c1)">
<rect x="0" y="0" width="78" height="43" fill="#d9dddd"/>
<rect x="0" y="36" width="78" height="1.2" fill="#8a5a4a"/>
<rect x="0" y="37.2" width="78" height="6" fill="#cdbca4"/>
<path d="M18 37 L18.5 29 Q26 26.5 34.5 29 L34.7 37Z" fill="#16171b"/>
<rect x="40" y="28.5" width="5.4" height="4.3" fill="#9ea2a4"/>
<rect x="36.3" y="32.8" width="22.4" height="5" fill="#1e2024" rx="1"/>
<path d="M51 37 L53 24 Q60 19.5 69 21.5 L70 37Z" fill="#a9b9cf"/>
<ellipse cx="62" cy="16.5" rx="5" ry="6.5" fill="#b8a89c"/>
<path d="M57 13 Q62 8 67 12 L67 14 Q62 11 57 15Z" fill="#c9c6c2"/>
<path d="M69.4 16 L74 14 L77 36 L71 38Z" fill="#4c4a58"/>
</g>
<g clip-path="url(#c2)">
<rect x="0" y="42" width="78" height="47" fill="#e6e2dc"/>
<rect x="0" y="42" width="78" height="3" fill="#cfc5b4"/>
<rect x="0" y="53.5" width="78" height="0.8" fill="#c8c4bc"/>
<rect x="25" y="60" width="10" height="19" fill="#4a6cb0"/>
<path d="M4 89 L5 80 Q14 74.5 24 78 L26 89Z" fill="#464a5c"/>
<ellipse cx="13" cy="70.5" rx="4.6" ry="5.5" fill="#bfa28a"/>
<path d="M8.4 69 Q13 61.5 17.6 69Z" fill="#7c6650"/>
<rect x="9.5" y="71.5" width="7.5" height="4.5" fill="#e6ecf0" rx="1.5"/>
<path d="M25 89 L27 73 Q40 64.5 58 66.5 Q70 70 73 89Z" fill="#23253a"/>
<path d="M31 84 L70 84 M29 87 L72 87" stroke="#78788a" stroke-width="0.7"/>
<ellipse cx="43" cy="57" rx="8" ry="10" fill="#c9ab92"/>
<path d="M34 56 Q33 43.5 43 44 Q53 43.5 52.5 56 Q49 49 43 49 Q37 49 34 56Z" fill="#6e5640"/>
<path d="M35 58.5 Q43 56 51 58.5 L50 68 Q43 72 36 68Z" fill="#e4ecf2"/>
</g>
<g clip-path="url(#c3)">
<rect x="0" y="88" width="78" height="46" fill="#46b446"/>
<rect x="5" y="88" width="21" height="46" fill="#3ca83c"/>
<rect x="52" y="88" width="26" height="46" fill="#9edf9c"/>
<path d="M25 133 Q24 95 41 89.7 Q57 92 58 133Z" fill="#1c2a1a"/>
<rect x="56.6" y="109.5" width="16" height="24" fill="#254f28" rx="2"/>
<ellipse cx="40.5" cy="107" rx="9.5" ry="13" fill="#c6de8e"/>
<path d="M30 104 Q31 92 41 91.5 Q51 92 51 102 Q45 96 39 97 Q33 99 30 104Z" fill="#1c2a1a"/>
<path d="M33 104.5 L48 104.5" stroke="#2a3020" stroke-width="1"/>
<ellipse cx="31" cy="115" rx="4.5" ry="6" fill="#b8d080"/>
<path d="M14 133 Q16 121 30 118 Q40 121 49 119 L52 133Z" fill="#151a14"/>
</g>
<g clip-path="url(#c4)">
<rect x="0" y="133" width="78" height="45" fill="#d6d5d0"/>
<rect x="0.5" y="133" width="16" height="25" fill="#f2f4f4"/>
<rect x="6" y="133" width="1.6" height="25" fill="#a8aaaa"/>
<rect x="0" y="157.7" width="20" height="20" fill="#a8a9a7"/>
<rect x="20" y="133" width="6.7" height="30" fill="#a2835f"/>
<rect x="32.6" y="134.2" width="15.4" height="11.2" fill="#3a62a8"/>
<rect x="56.6" y="154.5" width="21.4" height="23" fill="#c4c4c2"/>
<rect x="59.6" y="163.5" width="18.4" height="14" fill="#e8e8e6"/>
<path d="M20.9 177.5 L22 165 Q32 158 44 159 Q56 160 58 177.5Z" fill="#283656"/>
<ellipse cx="38.5" cy="153" rx="7.5" ry="9" fill="#9e7e68"/>
<path d="M31 150 Q31.5 143.5 38.5 143.8 Q46 143.5 46 150 Q42 146.5 38.5 147 Q34 147 31 150Z" fill="#2c2a2a"/>
<ellipse cx="36" cy="164" rx="3.5" ry="5" fill="#a8846a"/>
</g>
</g>
</svg>
</div></body></html>
